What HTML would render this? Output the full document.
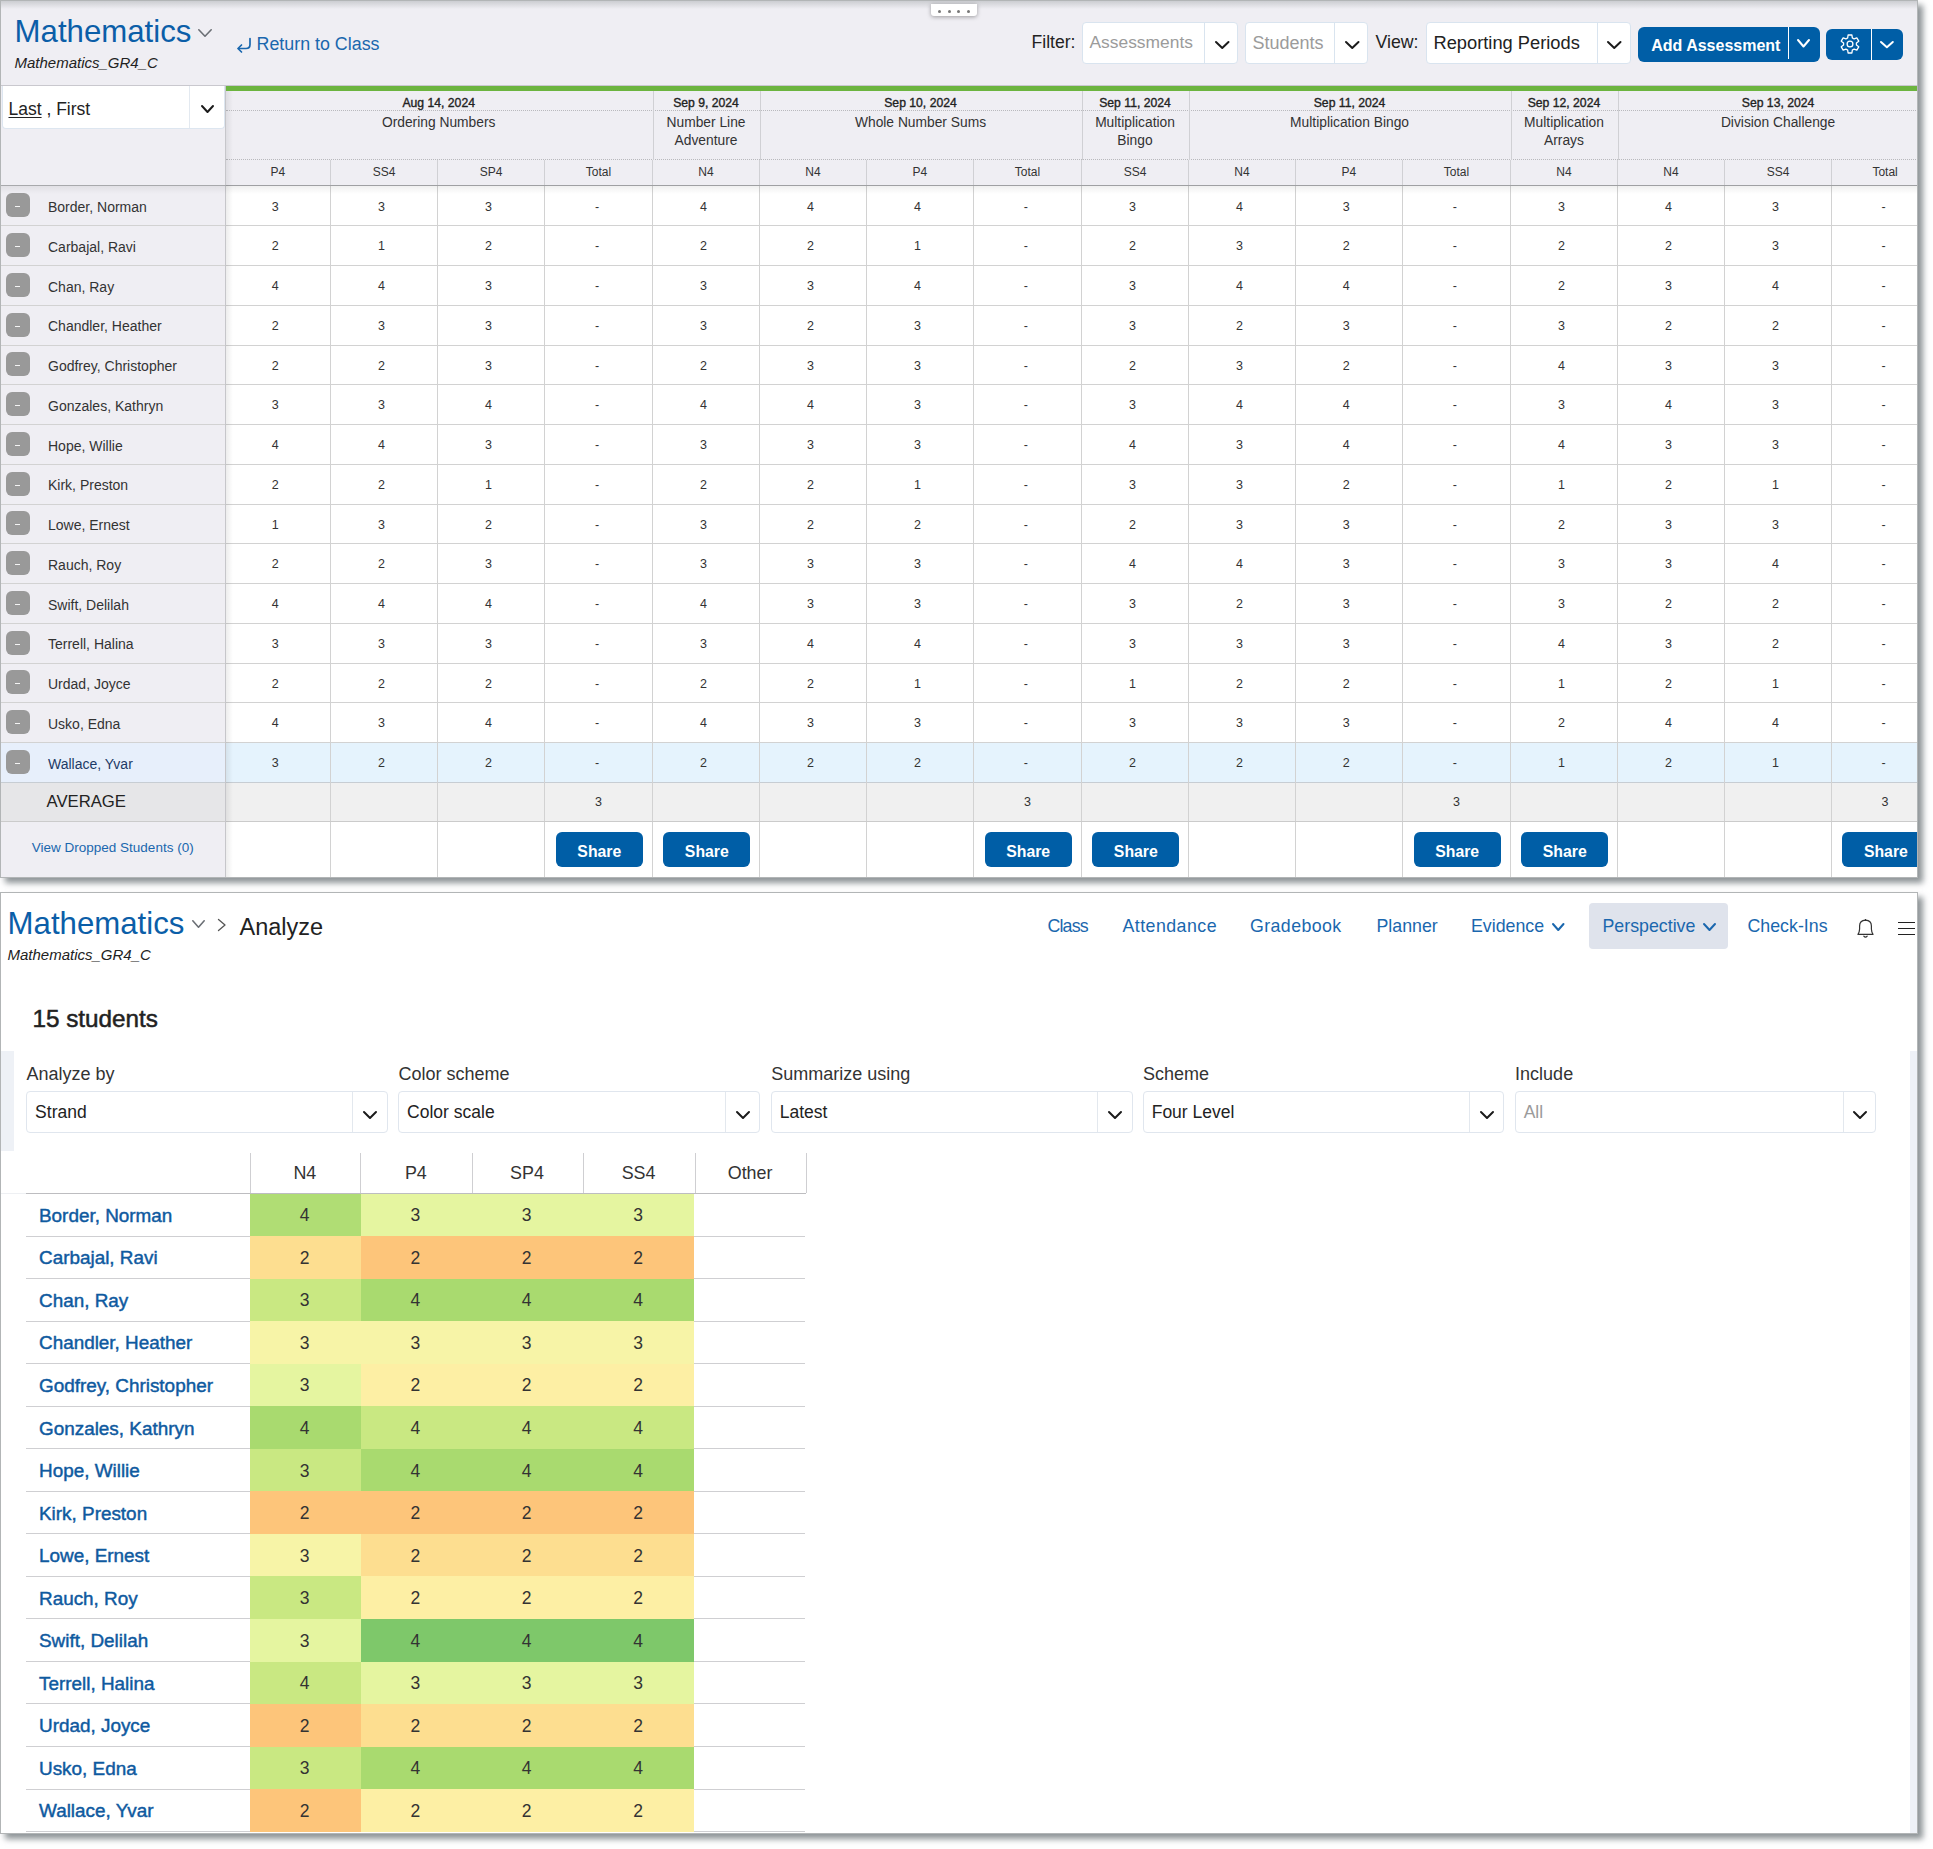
<!DOCTYPE html><html><head><meta charset="utf-8"><style>
html,body{margin:0;padding:0;background:#fff;}
body{width:1933px;height:1849px;position:relative;overflow:hidden;font-family:"Liberation Sans", sans-serif;}
.t{position:absolute;line-height:1;white-space:nowrap;}
.r{position:absolute;}
.panel{position:absolute;overflow:hidden;}
</style></head><body>
<div class="panel" style="left:0;top:0;width:1918px;height:878px;background:#efeef3;box-shadow:5px 5px 6px rgba(105,113,118,.75);">
<div class="r" style="left:0.00px;top:0.00px;width:1918.00px;height:9.00px;background:linear-gradient(rgba(160,165,168,.5),rgba(160,165,168,0));"></div>
<div class="t" style="left:14.60px;top:16.19px;font-size:31.2px;color:#0b5ea8;font-weight:normal;font-style:normal;">Mathematics</div>
<svg class="r" style="left:196.00px;top:26.50px" width="18.00" height="12.00"><polyline points="2.80,2.80 9.00,9.20 15.20,2.80" fill="none" stroke="#6b6f75" stroke-width="1.6" stroke-linecap="round" stroke-linejoin="round"/></svg>
<div class="t" style="left:14.50px;top:55.30px;font-size:15px;color:#222;font-weight:normal;font-style:italic;">Mathematics_GR4_C</div>
<svg class="r" style="left:235px;top:36px" width="18" height="18"><path d="M15 2.5 V8.5 Q15 12.5 11 12.5 H3.5" fill="none" stroke="#1a67ae" stroke-width="1.7" stroke-linecap="round"/><path d="M6.5 9 L3 12.5 L6.5 16" fill="none" stroke="#1a67ae" stroke-width="1.7" stroke-linecap="round" stroke-linejoin="round"/></svg>
<div class="t" style="left:256.50px;top:36.39px;font-size:17.85px;color:#1a67ae;font-weight:normal;font-style:normal;">Return to Class</div>
<div class="r" style="left:931px;top:4px;width:46px;height:12px;background:#fff;border-radius:0 0 3px 3px;box-shadow:0 1px 4px rgba(0,0,0,.35);"></div>
<div class="r" style="left:937.8px;top:9.8px;width:3px;height:3px;border-radius:50%;background:#777;"></div>
<div class="r" style="left:947.5px;top:9.8px;width:3px;height:3px;border-radius:50%;background:#777;"></div>
<div class="r" style="left:957.1px;top:9.8px;width:3px;height:3px;border-radius:50%;background:#777;"></div>
<div class="r" style="left:966.8px;top:9.8px;width:3px;height:3px;border-radius:50%;background:#777;"></div>
<div class="t" style="left:1031.50px;top:34.20px;font-size:17.6px;color:#222;font-weight:normal;font-style:normal;">Filter:</div>
<div class="r" style="left:1082.4px;top:21.5px;width:155.9px;height:42.9px;background:#fff;border:1px solid #d9e4ef;box-sizing:border-box;border-radius:4px;"></div>
<div class="r" style="left:1204.40px;top:22.50px;width:1.00px;height:40.90px;background:#d9e4ef;"></div>
<div class="t" style="left:1089.50px;top:34.37px;font-size:17.4px;color:#9b9b9b;font-weight:normal;font-style:normal;">Assessments</div>
<svg class="r" style="left:1213.00px;top:38.50px" width="18.50" height="12.00"><polyline points="3.00,3.00 9.25,9.00 15.50,3.00" fill="none" stroke="#1b1b1b" stroke-width="2" stroke-linecap="round" stroke-linejoin="round"/></svg>
<div class="r" style="left:1245.4px;top:21.5px;width:122.9px;height:42.9px;background:#fff;border:1px solid #d9e4ef;box-sizing:border-box;border-radius:4px;"></div>
<div class="r" style="left:1334.40px;top:22.50px;width:1.00px;height:40.90px;background:#d9e4ef;"></div>
<div class="t" style="left:1252.50px;top:33.86px;font-size:18px;color:#9b9b9b;font-weight:normal;font-style:normal;">Students</div>
<svg class="r" style="left:1342.50px;top:38.50px" width="18.50" height="12.00"><polyline points="3.00,3.00 9.25,9.00 15.50,3.00" fill="none" stroke="#1b1b1b" stroke-width="2" stroke-linecap="round" stroke-linejoin="round"/></svg>
<div class="t" style="left:1375.50px;top:34.12px;font-size:17.7px;color:#222;font-weight:normal;font-style:normal;">View:</div>
<div class="r" style="left:1425.6px;top:21.5px;width:205.4px;height:42.9px;background:#fff;border:1px solid #d9e4ef;box-sizing:border-box;border-radius:4px;"></div>
<div class="r" style="left:1596.50px;top:22.50px;width:1.00px;height:40.90px;background:#d9e4ef;"></div>
<div class="t" style="left:1433.50px;top:33.61px;font-size:18.3px;color:#222;font-weight:normal;font-style:normal;">Reporting Periods</div>
<svg class="r" style="left:1604.50px;top:38.50px" width="18.50" height="12.00"><polyline points="3.00,3.00 9.25,9.00 15.50,3.00" fill="none" stroke="#1b1b1b" stroke-width="2" stroke-linecap="round" stroke-linejoin="round"/></svg>
<div class="r" style="left:1638px;top:27px;width:182px;height:35px;background:#005ea6;border-radius:6px;"></div>
<div class="r" style="left:1788.00px;top:27.00px;width:1.20px;height:32.00px;background:#fff;"></div>
<div class="t" style="left:1651.20px;top:38.46px;font-size:16px;color:#fff;font-weight:bold;font-style:normal;">Add Assessment</div>
<svg class="r" style="left:1795.00px;top:36.70px" width="17.00" height="12.50"><polyline points="3.00,3.00 8.50,9.50 14.00,3.00" fill="none" stroke="#fff" stroke-width="2" stroke-linecap="round" stroke-linejoin="round"/></svg>
<div class="r" style="left:1826px;top:28.7px;width:77px;height:31.3px;background:#005ea6;border-radius:6px;"></div>
<div class="r" style="left:1871.00px;top:28.70px;width:1.20px;height:31.30px;background:#fff;"></div>
<svg class="r" style="left:1839.6px;top:33.8px" width="20" height="20"><path d="M7.67 3.93 L8.09 1.00 L11.91 1.00 L12.33 3.93 L14.09 4.95 L16.84 3.84 L18.75 7.16 L16.42 8.98 L16.42 11.02 L18.75 12.84 L16.84 16.16 L14.09 15.05 L12.33 16.07 L11.91 19.00 L8.09 19.00 L7.67 16.07 L5.91 15.05 L3.16 16.16 L1.25 12.84 L3.58 11.02 L3.58 8.98 L1.25 7.16 L3.16 3.84 L5.91 4.95 Z" fill="none" stroke="#fff" stroke-width="1.3" stroke-linejoin="round"/><circle cx="10" cy="10" r="2.9" fill="none" stroke="#fff" stroke-width="1.3"/></svg>
<svg class="r" style="left:1877.50px;top:39.30px" width="17.80" height="11.30"><polyline points="3.00,3.00 8.90,8.30 14.80,3.00" fill="none" stroke="#fff" stroke-width="2" stroke-linecap="round" stroke-linejoin="round"/></svg>
<div class="r" style="left:0.00px;top:85.00px;width:1918.00px;height:1.00px;background:#c9c8ce;"></div>
<div class="r" style="left:1.5px;top:86px;width:223px;height:42.6px;background:#fff;border:1px solid #dde6f0;border-top:none;box-sizing:border-box;border-radius:0 0 4px 4px;"></div>
<div class="r" style="left:189.00px;top:86.00px;width:1.00px;height:41.60px;background:#e3e9f0;"></div>
<div class="t" style="left:8.50px;top:101.19px;font-size:17.5px;color:#222;font-weight:normal;font-style:normal;"><span style="text-decoration:underline;text-underline-offset:2px;text-decoration-thickness:1px">Last</span> , First</div>
<svg class="r" style="left:199.00px;top:103.00px" width="17.00" height="12.00"><polyline points="3.00,3.00 8.50,9.00 14.00,3.00" fill="none" stroke="#1b1b1b" stroke-width="2" stroke-linecap="round" stroke-linejoin="round"/></svg>
<div class="r" style="left:226.00px;top:86.00px;width:1692.00px;height:5.00px;background:#6cb43f;"></div>
<div class="r" style="left:226px;top:110px;width:1692px;height:0;border-top:1px dotted #b9b9bd;"></div>
<div class="r" style="left:226px;top:159px;width:1692px;height:0;border-top:1px dotted #b9b9bd;"></div>
<div class="t" style="left:278.70px;width:320px;text-align:center;top:96.77px;font-size:12.2px;color:#222;font-weight:normal;font-style:normal;-webkit-text-stroke:0.35px #222;">Aug 14, 2024</div>
<div class="t" style="left:278.70px;width:320px;text-align:center;top:116.32px;font-size:13.8px;color:#333;font-weight:normal;font-style:normal;">Ordering Numbers</div>
<div class="r" style="left:653.00px;top:91.00px;width:1.00px;height:68.50px;background:#d0d0d4;"></div>
<div class="t" style="left:546.00px;width:320px;text-align:center;top:96.77px;font-size:12.2px;color:#222;font-weight:normal;font-style:normal;-webkit-text-stroke:0.35px #222;">Sep 9, 2024</div>
<div class="t" style="left:546.00px;width:320px;text-align:center;top:116.32px;font-size:13.8px;color:#333;font-weight:normal;font-style:normal;">Number Line</div>
<div class="t" style="left:546.00px;width:320px;text-align:center;top:134.32px;font-size:13.8px;color:#333;font-weight:normal;font-style:normal;">Adventure</div>
<div class="r" style="left:760.00px;top:91.00px;width:1.00px;height:68.50px;background:#d0d0d4;"></div>
<div class="t" style="left:760.50px;width:320px;text-align:center;top:96.77px;font-size:12.2px;color:#222;font-weight:normal;font-style:normal;-webkit-text-stroke:0.35px #222;">Sep 10, 2024</div>
<div class="t" style="left:760.50px;width:320px;text-align:center;top:116.32px;font-size:13.8px;color:#333;font-weight:normal;font-style:normal;">Whole Number Sums</div>
<div class="r" style="left:1082.00px;top:91.00px;width:1.00px;height:68.50px;background:#d0d0d4;"></div>
<div class="t" style="left:975.00px;width:320px;text-align:center;top:96.77px;font-size:12.2px;color:#222;font-weight:normal;font-style:normal;-webkit-text-stroke:0.35px #222;">Sep 11, 2024</div>
<div class="t" style="left:975.00px;width:320px;text-align:center;top:116.32px;font-size:13.8px;color:#333;font-weight:normal;font-style:normal;">Multiplication</div>
<div class="t" style="left:975.00px;width:320px;text-align:center;top:134.32px;font-size:13.8px;color:#333;font-weight:normal;font-style:normal;">Bingo</div>
<div class="r" style="left:1189.00px;top:91.00px;width:1.00px;height:68.50px;background:#d0d0d4;"></div>
<div class="t" style="left:1189.55px;width:320px;text-align:center;top:96.77px;font-size:12.2px;color:#222;font-weight:normal;font-style:normal;-webkit-text-stroke:0.35px #222;">Sep 11, 2024</div>
<div class="t" style="left:1189.55px;width:320px;text-align:center;top:116.32px;font-size:13.8px;color:#333;font-weight:normal;font-style:normal;">Multiplication Bingo</div>
<div class="r" style="left:1511.00px;top:91.00px;width:1.00px;height:68.50px;background:#d0d0d4;"></div>
<div class="t" style="left:1403.95px;width:320px;text-align:center;top:96.77px;font-size:12.2px;color:#222;font-weight:normal;font-style:normal;-webkit-text-stroke:0.35px #222;">Sep 12, 2024</div>
<div class="t" style="left:1403.95px;width:320px;text-align:center;top:116.32px;font-size:13.8px;color:#333;font-weight:normal;font-style:normal;">Multiplication</div>
<div class="t" style="left:1403.95px;width:320px;text-align:center;top:134.32px;font-size:13.8px;color:#333;font-weight:normal;font-style:normal;">Arrays</div>
<div class="r" style="left:1618.00px;top:91.00px;width:1.00px;height:68.50px;background:#d0d0d4;"></div>
<div class="t" style="left:1618.05px;width:320px;text-align:center;top:96.77px;font-size:12.2px;color:#222;font-weight:normal;font-style:normal;-webkit-text-stroke:0.35px #222;">Sep 13, 2024</div>
<div class="t" style="left:1618.05px;width:320px;text-align:center;top:116.32px;font-size:13.8px;color:#333;font-weight:normal;font-style:normal;">Division Challenge</div>
<div class="t" style="left:227.80px;width:100px;text-align:center;top:165.84px;font-size:12px;color:#333;font-weight:normal;font-style:normal;">P4</div>
<div class="t" style="left:334.10px;width:100px;text-align:center;top:165.84px;font-size:12px;color:#333;font-weight:normal;font-style:normal;">SS4</div>
<div class="r" style="left:330.00px;top:160.00px;width:1.00px;height:25.00px;background:#d0d0d4;"></div>
<div class="t" style="left:441.10px;width:100px;text-align:center;top:165.84px;font-size:12px;color:#333;font-weight:normal;font-style:normal;">SP4</div>
<div class="r" style="left:437.00px;top:160.00px;width:1.00px;height:25.00px;background:#d0d0d4;"></div>
<div class="t" style="left:548.50px;width:100px;text-align:center;top:165.84px;font-size:12px;color:#333;font-weight:normal;font-style:normal;">Total</div>
<div class="r" style="left:544.00px;top:160.00px;width:1.00px;height:25.00px;background:#d0d0d4;"></div>
<div class="t" style="left:656.00px;width:100px;text-align:center;top:165.84px;font-size:12px;color:#333;font-weight:normal;font-style:normal;">N4</div>
<div class="r" style="left:652.00px;top:160.00px;width:1.00px;height:25.00px;background:#d0d0d4;"></div>
<div class="t" style="left:763.00px;width:100px;text-align:center;top:165.84px;font-size:12px;color:#333;font-weight:normal;font-style:normal;">N4</div>
<div class="r" style="left:759.00px;top:160.00px;width:1.00px;height:25.00px;background:#d0d0d4;"></div>
<div class="t" style="left:869.90px;width:100px;text-align:center;top:165.84px;font-size:12px;color:#333;font-weight:normal;font-style:normal;">P4</div>
<div class="r" style="left:866.00px;top:160.00px;width:1.00px;height:25.00px;background:#d0d0d4;"></div>
<div class="t" style="left:977.40px;width:100px;text-align:center;top:165.84px;font-size:12px;color:#333;font-weight:normal;font-style:normal;">Total</div>
<div class="r" style="left:973.00px;top:160.00px;width:1.00px;height:25.00px;background:#d0d0d4;"></div>
<div class="t" style="left:1085.00px;width:100px;text-align:center;top:165.84px;font-size:12px;color:#333;font-weight:normal;font-style:normal;">SS4</div>
<div class="r" style="left:1081.00px;top:160.00px;width:1.00px;height:25.00px;background:#d0d0d4;"></div>
<div class="t" style="left:1191.95px;width:100px;text-align:center;top:165.84px;font-size:12px;color:#333;font-weight:normal;font-style:normal;">N4</div>
<div class="r" style="left:1188.00px;top:160.00px;width:1.00px;height:25.00px;background:#d0d0d4;"></div>
<div class="t" style="left:1298.80px;width:100px;text-align:center;top:165.84px;font-size:12px;color:#333;font-weight:normal;font-style:normal;">P4</div>
<div class="r" style="left:1295.00px;top:160.00px;width:1.00px;height:25.00px;background:#d0d0d4;"></div>
<div class="t" style="left:1406.40px;width:100px;text-align:center;top:165.84px;font-size:12px;color:#333;font-weight:normal;font-style:normal;">Total</div>
<div class="r" style="left:1402.00px;top:160.00px;width:1.00px;height:25.00px;background:#d0d0d4;"></div>
<div class="t" style="left:1513.95px;width:100px;text-align:center;top:165.84px;font-size:12px;color:#333;font-weight:normal;font-style:normal;">N4</div>
<div class="r" style="left:1510.00px;top:160.00px;width:1.00px;height:25.00px;background:#d0d0d4;"></div>
<div class="t" style="left:1620.95px;width:100px;text-align:center;top:165.84px;font-size:12px;color:#333;font-weight:normal;font-style:normal;">N4</div>
<div class="r" style="left:1617.00px;top:160.00px;width:1.00px;height:25.00px;background:#d0d0d4;"></div>
<div class="t" style="left:1728.00px;width:100px;text-align:center;top:165.84px;font-size:12px;color:#333;font-weight:normal;font-style:normal;">SS4</div>
<div class="r" style="left:1724.00px;top:160.00px;width:1.00px;height:25.00px;background:#d0d0d4;"></div>
<div class="t" style="left:1835.10px;width:100px;text-align:center;top:165.84px;font-size:12px;color:#333;font-weight:normal;font-style:normal;">Total</div>
<div class="r" style="left:1831.00px;top:160.00px;width:1.00px;height:25.00px;background:#d0d0d4;"></div>
<div class="r" style="left:226.00px;top:185.00px;width:1692.00px;height:1.30px;background:#9fa0a3;"></div>
<div class="r" style="left:226.00px;top:186.30px;width:1692.00px;height:596.00px;background:#fff;"></div>
<div class="t" style="left:245.30px;width:60px;text-align:center;top:200.72px;font-size:12.5px;color:#333;font-weight:normal;font-style:normal;">3</div>
<div class="t" style="left:351.60px;width:60px;text-align:center;top:200.72px;font-size:12.5px;color:#333;font-weight:normal;font-style:normal;">3</div>
<div class="t" style="left:458.60px;width:60px;text-align:center;top:200.72px;font-size:12.5px;color:#333;font-weight:normal;font-style:normal;">3</div>
<div class="t" style="left:567.00px;width:60px;text-align:center;top:200.72px;font-size:12.5px;color:#333;font-weight:normal;font-style:normal;">-</div>
<div class="t" style="left:673.50px;width:60px;text-align:center;top:200.72px;font-size:12.5px;color:#333;font-weight:normal;font-style:normal;">4</div>
<div class="t" style="left:780.50px;width:60px;text-align:center;top:200.72px;font-size:12.5px;color:#333;font-weight:normal;font-style:normal;">4</div>
<div class="t" style="left:887.40px;width:60px;text-align:center;top:200.72px;font-size:12.5px;color:#333;font-weight:normal;font-style:normal;">4</div>
<div class="t" style="left:995.90px;width:60px;text-align:center;top:200.72px;font-size:12.5px;color:#333;font-weight:normal;font-style:normal;">-</div>
<div class="t" style="left:1102.50px;width:60px;text-align:center;top:200.72px;font-size:12.5px;color:#333;font-weight:normal;font-style:normal;">3</div>
<div class="t" style="left:1209.45px;width:60px;text-align:center;top:200.72px;font-size:12.5px;color:#333;font-weight:normal;font-style:normal;">4</div>
<div class="t" style="left:1316.30px;width:60px;text-align:center;top:200.72px;font-size:12.5px;color:#333;font-weight:normal;font-style:normal;">3</div>
<div class="t" style="left:1424.90px;width:60px;text-align:center;top:200.72px;font-size:12.5px;color:#333;font-weight:normal;font-style:normal;">-</div>
<div class="t" style="left:1531.45px;width:60px;text-align:center;top:200.72px;font-size:12.5px;color:#333;font-weight:normal;font-style:normal;">3</div>
<div class="t" style="left:1638.45px;width:60px;text-align:center;top:200.72px;font-size:12.5px;color:#333;font-weight:normal;font-style:normal;">4</div>
<div class="t" style="left:1745.50px;width:60px;text-align:center;top:200.72px;font-size:12.5px;color:#333;font-weight:normal;font-style:normal;">3</div>
<div class="t" style="left:1853.60px;width:60px;text-align:center;top:200.72px;font-size:12.5px;color:#333;font-weight:normal;font-style:normal;">-</div>
<div class="r" style="left:6px;top:193.30px;width:24px;height:24px;border-radius:6px;background:#999;"></div>
<div class="r" style="left:15.30px;top:206.30px;width:5.20px;height:1.00px;background:#f4f4f4;"></div>
<div class="t" style="left:48.00px;top:200.05px;font-size:14px;color:#333;font-weight:normal;font-style:normal;">Border, Norman</div>
<div class="r" style="left:1.00px;top:225.45px;width:1917.00px;height:1.00px;background:#d2d2d2;"></div>
<div class="t" style="left:245.30px;width:60px;text-align:center;top:240.47px;font-size:12.5px;color:#333;font-weight:normal;font-style:normal;">2</div>
<div class="t" style="left:351.60px;width:60px;text-align:center;top:240.47px;font-size:12.5px;color:#333;font-weight:normal;font-style:normal;">1</div>
<div class="t" style="left:458.60px;width:60px;text-align:center;top:240.47px;font-size:12.5px;color:#333;font-weight:normal;font-style:normal;">2</div>
<div class="t" style="left:567.00px;width:60px;text-align:center;top:240.47px;font-size:12.5px;color:#333;font-weight:normal;font-style:normal;">-</div>
<div class="t" style="left:673.50px;width:60px;text-align:center;top:240.47px;font-size:12.5px;color:#333;font-weight:normal;font-style:normal;">2</div>
<div class="t" style="left:780.50px;width:60px;text-align:center;top:240.47px;font-size:12.5px;color:#333;font-weight:normal;font-style:normal;">2</div>
<div class="t" style="left:887.40px;width:60px;text-align:center;top:240.47px;font-size:12.5px;color:#333;font-weight:normal;font-style:normal;">1</div>
<div class="t" style="left:995.90px;width:60px;text-align:center;top:240.47px;font-size:12.5px;color:#333;font-weight:normal;font-style:normal;">-</div>
<div class="t" style="left:1102.50px;width:60px;text-align:center;top:240.47px;font-size:12.5px;color:#333;font-weight:normal;font-style:normal;">2</div>
<div class="t" style="left:1209.45px;width:60px;text-align:center;top:240.47px;font-size:12.5px;color:#333;font-weight:normal;font-style:normal;">3</div>
<div class="t" style="left:1316.30px;width:60px;text-align:center;top:240.47px;font-size:12.5px;color:#333;font-weight:normal;font-style:normal;">2</div>
<div class="t" style="left:1424.90px;width:60px;text-align:center;top:240.47px;font-size:12.5px;color:#333;font-weight:normal;font-style:normal;">-</div>
<div class="t" style="left:1531.45px;width:60px;text-align:center;top:240.47px;font-size:12.5px;color:#333;font-weight:normal;font-style:normal;">2</div>
<div class="t" style="left:1638.45px;width:60px;text-align:center;top:240.47px;font-size:12.5px;color:#333;font-weight:normal;font-style:normal;">2</div>
<div class="t" style="left:1745.50px;width:60px;text-align:center;top:240.47px;font-size:12.5px;color:#333;font-weight:normal;font-style:normal;">3</div>
<div class="t" style="left:1853.60px;width:60px;text-align:center;top:240.47px;font-size:12.5px;color:#333;font-weight:normal;font-style:normal;">-</div>
<div class="r" style="left:6px;top:233.05px;width:24px;height:24px;border-radius:6px;background:#999;"></div>
<div class="r" style="left:15.30px;top:246.05px;width:5.20px;height:1.00px;background:#f4f4f4;"></div>
<div class="t" style="left:48.00px;top:239.80px;font-size:14px;color:#333;font-weight:normal;font-style:normal;">Carbajal, Ravi</div>
<div class="r" style="left:1.00px;top:265.20px;width:1917.00px;height:1.00px;background:#d2d2d2;"></div>
<div class="t" style="left:245.30px;width:60px;text-align:center;top:280.22px;font-size:12.5px;color:#333;font-weight:normal;font-style:normal;">4</div>
<div class="t" style="left:351.60px;width:60px;text-align:center;top:280.22px;font-size:12.5px;color:#333;font-weight:normal;font-style:normal;">4</div>
<div class="t" style="left:458.60px;width:60px;text-align:center;top:280.22px;font-size:12.5px;color:#333;font-weight:normal;font-style:normal;">3</div>
<div class="t" style="left:567.00px;width:60px;text-align:center;top:280.22px;font-size:12.5px;color:#333;font-weight:normal;font-style:normal;">-</div>
<div class="t" style="left:673.50px;width:60px;text-align:center;top:280.22px;font-size:12.5px;color:#333;font-weight:normal;font-style:normal;">3</div>
<div class="t" style="left:780.50px;width:60px;text-align:center;top:280.22px;font-size:12.5px;color:#333;font-weight:normal;font-style:normal;">3</div>
<div class="t" style="left:887.40px;width:60px;text-align:center;top:280.22px;font-size:12.5px;color:#333;font-weight:normal;font-style:normal;">4</div>
<div class="t" style="left:995.90px;width:60px;text-align:center;top:280.22px;font-size:12.5px;color:#333;font-weight:normal;font-style:normal;">-</div>
<div class="t" style="left:1102.50px;width:60px;text-align:center;top:280.22px;font-size:12.5px;color:#333;font-weight:normal;font-style:normal;">3</div>
<div class="t" style="left:1209.45px;width:60px;text-align:center;top:280.22px;font-size:12.5px;color:#333;font-weight:normal;font-style:normal;">4</div>
<div class="t" style="left:1316.30px;width:60px;text-align:center;top:280.22px;font-size:12.5px;color:#333;font-weight:normal;font-style:normal;">4</div>
<div class="t" style="left:1424.90px;width:60px;text-align:center;top:280.22px;font-size:12.5px;color:#333;font-weight:normal;font-style:normal;">-</div>
<div class="t" style="left:1531.45px;width:60px;text-align:center;top:280.22px;font-size:12.5px;color:#333;font-weight:normal;font-style:normal;">2</div>
<div class="t" style="left:1638.45px;width:60px;text-align:center;top:280.22px;font-size:12.5px;color:#333;font-weight:normal;font-style:normal;">3</div>
<div class="t" style="left:1745.50px;width:60px;text-align:center;top:280.22px;font-size:12.5px;color:#333;font-weight:normal;font-style:normal;">4</div>
<div class="t" style="left:1853.60px;width:60px;text-align:center;top:280.22px;font-size:12.5px;color:#333;font-weight:normal;font-style:normal;">-</div>
<div class="r" style="left:6px;top:272.80px;width:24px;height:24px;border-radius:6px;background:#999;"></div>
<div class="r" style="left:15.30px;top:285.80px;width:5.20px;height:1.00px;background:#f4f4f4;"></div>
<div class="t" style="left:48.00px;top:279.55px;font-size:14px;color:#333;font-weight:normal;font-style:normal;">Chan, Ray</div>
<div class="r" style="left:1.00px;top:304.95px;width:1917.00px;height:1.00px;background:#d2d2d2;"></div>
<div class="t" style="left:245.30px;width:60px;text-align:center;top:319.97px;font-size:12.5px;color:#333;font-weight:normal;font-style:normal;">2</div>
<div class="t" style="left:351.60px;width:60px;text-align:center;top:319.97px;font-size:12.5px;color:#333;font-weight:normal;font-style:normal;">3</div>
<div class="t" style="left:458.60px;width:60px;text-align:center;top:319.97px;font-size:12.5px;color:#333;font-weight:normal;font-style:normal;">3</div>
<div class="t" style="left:567.00px;width:60px;text-align:center;top:319.97px;font-size:12.5px;color:#333;font-weight:normal;font-style:normal;">-</div>
<div class="t" style="left:673.50px;width:60px;text-align:center;top:319.97px;font-size:12.5px;color:#333;font-weight:normal;font-style:normal;">3</div>
<div class="t" style="left:780.50px;width:60px;text-align:center;top:319.97px;font-size:12.5px;color:#333;font-weight:normal;font-style:normal;">2</div>
<div class="t" style="left:887.40px;width:60px;text-align:center;top:319.97px;font-size:12.5px;color:#333;font-weight:normal;font-style:normal;">3</div>
<div class="t" style="left:995.90px;width:60px;text-align:center;top:319.97px;font-size:12.5px;color:#333;font-weight:normal;font-style:normal;">-</div>
<div class="t" style="left:1102.50px;width:60px;text-align:center;top:319.97px;font-size:12.5px;color:#333;font-weight:normal;font-style:normal;">3</div>
<div class="t" style="left:1209.45px;width:60px;text-align:center;top:319.97px;font-size:12.5px;color:#333;font-weight:normal;font-style:normal;">2</div>
<div class="t" style="left:1316.30px;width:60px;text-align:center;top:319.97px;font-size:12.5px;color:#333;font-weight:normal;font-style:normal;">3</div>
<div class="t" style="left:1424.90px;width:60px;text-align:center;top:319.97px;font-size:12.5px;color:#333;font-weight:normal;font-style:normal;">-</div>
<div class="t" style="left:1531.45px;width:60px;text-align:center;top:319.97px;font-size:12.5px;color:#333;font-weight:normal;font-style:normal;">3</div>
<div class="t" style="left:1638.45px;width:60px;text-align:center;top:319.97px;font-size:12.5px;color:#333;font-weight:normal;font-style:normal;">2</div>
<div class="t" style="left:1745.50px;width:60px;text-align:center;top:319.97px;font-size:12.5px;color:#333;font-weight:normal;font-style:normal;">2</div>
<div class="t" style="left:1853.60px;width:60px;text-align:center;top:319.97px;font-size:12.5px;color:#333;font-weight:normal;font-style:normal;">-</div>
<div class="r" style="left:6px;top:312.55px;width:24px;height:24px;border-radius:6px;background:#999;"></div>
<div class="r" style="left:15.30px;top:325.55px;width:5.20px;height:1.00px;background:#f4f4f4;"></div>
<div class="t" style="left:48.00px;top:319.30px;font-size:14px;color:#333;font-weight:normal;font-style:normal;">Chandler, Heather</div>
<div class="r" style="left:1.00px;top:344.70px;width:1917.00px;height:1.00px;background:#d2d2d2;"></div>
<div class="t" style="left:245.30px;width:60px;text-align:center;top:359.72px;font-size:12.5px;color:#333;font-weight:normal;font-style:normal;">2</div>
<div class="t" style="left:351.60px;width:60px;text-align:center;top:359.72px;font-size:12.5px;color:#333;font-weight:normal;font-style:normal;">2</div>
<div class="t" style="left:458.60px;width:60px;text-align:center;top:359.72px;font-size:12.5px;color:#333;font-weight:normal;font-style:normal;">3</div>
<div class="t" style="left:567.00px;width:60px;text-align:center;top:359.72px;font-size:12.5px;color:#333;font-weight:normal;font-style:normal;">-</div>
<div class="t" style="left:673.50px;width:60px;text-align:center;top:359.72px;font-size:12.5px;color:#333;font-weight:normal;font-style:normal;">2</div>
<div class="t" style="left:780.50px;width:60px;text-align:center;top:359.72px;font-size:12.5px;color:#333;font-weight:normal;font-style:normal;">3</div>
<div class="t" style="left:887.40px;width:60px;text-align:center;top:359.72px;font-size:12.5px;color:#333;font-weight:normal;font-style:normal;">3</div>
<div class="t" style="left:995.90px;width:60px;text-align:center;top:359.72px;font-size:12.5px;color:#333;font-weight:normal;font-style:normal;">-</div>
<div class="t" style="left:1102.50px;width:60px;text-align:center;top:359.72px;font-size:12.5px;color:#333;font-weight:normal;font-style:normal;">2</div>
<div class="t" style="left:1209.45px;width:60px;text-align:center;top:359.72px;font-size:12.5px;color:#333;font-weight:normal;font-style:normal;">3</div>
<div class="t" style="left:1316.30px;width:60px;text-align:center;top:359.72px;font-size:12.5px;color:#333;font-weight:normal;font-style:normal;">2</div>
<div class="t" style="left:1424.90px;width:60px;text-align:center;top:359.72px;font-size:12.5px;color:#333;font-weight:normal;font-style:normal;">-</div>
<div class="t" style="left:1531.45px;width:60px;text-align:center;top:359.72px;font-size:12.5px;color:#333;font-weight:normal;font-style:normal;">4</div>
<div class="t" style="left:1638.45px;width:60px;text-align:center;top:359.72px;font-size:12.5px;color:#333;font-weight:normal;font-style:normal;">3</div>
<div class="t" style="left:1745.50px;width:60px;text-align:center;top:359.72px;font-size:12.5px;color:#333;font-weight:normal;font-style:normal;">3</div>
<div class="t" style="left:1853.60px;width:60px;text-align:center;top:359.72px;font-size:12.5px;color:#333;font-weight:normal;font-style:normal;">-</div>
<div class="r" style="left:6px;top:352.30px;width:24px;height:24px;border-radius:6px;background:#999;"></div>
<div class="r" style="left:15.30px;top:365.30px;width:5.20px;height:1.00px;background:#f4f4f4;"></div>
<div class="t" style="left:48.00px;top:359.05px;font-size:14px;color:#333;font-weight:normal;font-style:normal;">Godfrey, Christopher</div>
<div class="r" style="left:1.00px;top:384.45px;width:1917.00px;height:1.00px;background:#d2d2d2;"></div>
<div class="t" style="left:245.30px;width:60px;text-align:center;top:399.47px;font-size:12.5px;color:#333;font-weight:normal;font-style:normal;">3</div>
<div class="t" style="left:351.60px;width:60px;text-align:center;top:399.47px;font-size:12.5px;color:#333;font-weight:normal;font-style:normal;">3</div>
<div class="t" style="left:458.60px;width:60px;text-align:center;top:399.47px;font-size:12.5px;color:#333;font-weight:normal;font-style:normal;">4</div>
<div class="t" style="left:567.00px;width:60px;text-align:center;top:399.47px;font-size:12.5px;color:#333;font-weight:normal;font-style:normal;">-</div>
<div class="t" style="left:673.50px;width:60px;text-align:center;top:399.47px;font-size:12.5px;color:#333;font-weight:normal;font-style:normal;">4</div>
<div class="t" style="left:780.50px;width:60px;text-align:center;top:399.47px;font-size:12.5px;color:#333;font-weight:normal;font-style:normal;">4</div>
<div class="t" style="left:887.40px;width:60px;text-align:center;top:399.47px;font-size:12.5px;color:#333;font-weight:normal;font-style:normal;">3</div>
<div class="t" style="left:995.90px;width:60px;text-align:center;top:399.47px;font-size:12.5px;color:#333;font-weight:normal;font-style:normal;">-</div>
<div class="t" style="left:1102.50px;width:60px;text-align:center;top:399.47px;font-size:12.5px;color:#333;font-weight:normal;font-style:normal;">3</div>
<div class="t" style="left:1209.45px;width:60px;text-align:center;top:399.47px;font-size:12.5px;color:#333;font-weight:normal;font-style:normal;">4</div>
<div class="t" style="left:1316.30px;width:60px;text-align:center;top:399.47px;font-size:12.5px;color:#333;font-weight:normal;font-style:normal;">4</div>
<div class="t" style="left:1424.90px;width:60px;text-align:center;top:399.47px;font-size:12.5px;color:#333;font-weight:normal;font-style:normal;">-</div>
<div class="t" style="left:1531.45px;width:60px;text-align:center;top:399.47px;font-size:12.5px;color:#333;font-weight:normal;font-style:normal;">3</div>
<div class="t" style="left:1638.45px;width:60px;text-align:center;top:399.47px;font-size:12.5px;color:#333;font-weight:normal;font-style:normal;">4</div>
<div class="t" style="left:1745.50px;width:60px;text-align:center;top:399.47px;font-size:12.5px;color:#333;font-weight:normal;font-style:normal;">3</div>
<div class="t" style="left:1853.60px;width:60px;text-align:center;top:399.47px;font-size:12.5px;color:#333;font-weight:normal;font-style:normal;">-</div>
<div class="r" style="left:6px;top:392.05px;width:24px;height:24px;border-radius:6px;background:#999;"></div>
<div class="r" style="left:15.30px;top:405.05px;width:5.20px;height:1.00px;background:#f4f4f4;"></div>
<div class="t" style="left:48.00px;top:398.80px;font-size:14px;color:#333;font-weight:normal;font-style:normal;">Gonzales, Kathryn</div>
<div class="r" style="left:1.00px;top:424.20px;width:1917.00px;height:1.00px;background:#d2d2d2;"></div>
<div class="t" style="left:245.30px;width:60px;text-align:center;top:439.22px;font-size:12.5px;color:#333;font-weight:normal;font-style:normal;">4</div>
<div class="t" style="left:351.60px;width:60px;text-align:center;top:439.22px;font-size:12.5px;color:#333;font-weight:normal;font-style:normal;">4</div>
<div class="t" style="left:458.60px;width:60px;text-align:center;top:439.22px;font-size:12.5px;color:#333;font-weight:normal;font-style:normal;">3</div>
<div class="t" style="left:567.00px;width:60px;text-align:center;top:439.22px;font-size:12.5px;color:#333;font-weight:normal;font-style:normal;">-</div>
<div class="t" style="left:673.50px;width:60px;text-align:center;top:439.22px;font-size:12.5px;color:#333;font-weight:normal;font-style:normal;">3</div>
<div class="t" style="left:780.50px;width:60px;text-align:center;top:439.22px;font-size:12.5px;color:#333;font-weight:normal;font-style:normal;">3</div>
<div class="t" style="left:887.40px;width:60px;text-align:center;top:439.22px;font-size:12.5px;color:#333;font-weight:normal;font-style:normal;">3</div>
<div class="t" style="left:995.90px;width:60px;text-align:center;top:439.22px;font-size:12.5px;color:#333;font-weight:normal;font-style:normal;">-</div>
<div class="t" style="left:1102.50px;width:60px;text-align:center;top:439.22px;font-size:12.5px;color:#333;font-weight:normal;font-style:normal;">4</div>
<div class="t" style="left:1209.45px;width:60px;text-align:center;top:439.22px;font-size:12.5px;color:#333;font-weight:normal;font-style:normal;">3</div>
<div class="t" style="left:1316.30px;width:60px;text-align:center;top:439.22px;font-size:12.5px;color:#333;font-weight:normal;font-style:normal;">4</div>
<div class="t" style="left:1424.90px;width:60px;text-align:center;top:439.22px;font-size:12.5px;color:#333;font-weight:normal;font-style:normal;">-</div>
<div class="t" style="left:1531.45px;width:60px;text-align:center;top:439.22px;font-size:12.5px;color:#333;font-weight:normal;font-style:normal;">4</div>
<div class="t" style="left:1638.45px;width:60px;text-align:center;top:439.22px;font-size:12.5px;color:#333;font-weight:normal;font-style:normal;">3</div>
<div class="t" style="left:1745.50px;width:60px;text-align:center;top:439.22px;font-size:12.5px;color:#333;font-weight:normal;font-style:normal;">3</div>
<div class="t" style="left:1853.60px;width:60px;text-align:center;top:439.22px;font-size:12.5px;color:#333;font-weight:normal;font-style:normal;">-</div>
<div class="r" style="left:6px;top:431.80px;width:24px;height:24px;border-radius:6px;background:#999;"></div>
<div class="r" style="left:15.30px;top:444.80px;width:5.20px;height:1.00px;background:#f4f4f4;"></div>
<div class="t" style="left:48.00px;top:438.55px;font-size:14px;color:#333;font-weight:normal;font-style:normal;">Hope, Willie</div>
<div class="r" style="left:1.00px;top:463.95px;width:1917.00px;height:1.00px;background:#d2d2d2;"></div>
<div class="t" style="left:245.30px;width:60px;text-align:center;top:478.97px;font-size:12.5px;color:#333;font-weight:normal;font-style:normal;">2</div>
<div class="t" style="left:351.60px;width:60px;text-align:center;top:478.97px;font-size:12.5px;color:#333;font-weight:normal;font-style:normal;">2</div>
<div class="t" style="left:458.60px;width:60px;text-align:center;top:478.97px;font-size:12.5px;color:#333;font-weight:normal;font-style:normal;">1</div>
<div class="t" style="left:567.00px;width:60px;text-align:center;top:478.97px;font-size:12.5px;color:#333;font-weight:normal;font-style:normal;">-</div>
<div class="t" style="left:673.50px;width:60px;text-align:center;top:478.97px;font-size:12.5px;color:#333;font-weight:normal;font-style:normal;">2</div>
<div class="t" style="left:780.50px;width:60px;text-align:center;top:478.97px;font-size:12.5px;color:#333;font-weight:normal;font-style:normal;">2</div>
<div class="t" style="left:887.40px;width:60px;text-align:center;top:478.97px;font-size:12.5px;color:#333;font-weight:normal;font-style:normal;">1</div>
<div class="t" style="left:995.90px;width:60px;text-align:center;top:478.97px;font-size:12.5px;color:#333;font-weight:normal;font-style:normal;">-</div>
<div class="t" style="left:1102.50px;width:60px;text-align:center;top:478.97px;font-size:12.5px;color:#333;font-weight:normal;font-style:normal;">3</div>
<div class="t" style="left:1209.45px;width:60px;text-align:center;top:478.97px;font-size:12.5px;color:#333;font-weight:normal;font-style:normal;">3</div>
<div class="t" style="left:1316.30px;width:60px;text-align:center;top:478.97px;font-size:12.5px;color:#333;font-weight:normal;font-style:normal;">2</div>
<div class="t" style="left:1424.90px;width:60px;text-align:center;top:478.97px;font-size:12.5px;color:#333;font-weight:normal;font-style:normal;">-</div>
<div class="t" style="left:1531.45px;width:60px;text-align:center;top:478.97px;font-size:12.5px;color:#333;font-weight:normal;font-style:normal;">1</div>
<div class="t" style="left:1638.45px;width:60px;text-align:center;top:478.97px;font-size:12.5px;color:#333;font-weight:normal;font-style:normal;">2</div>
<div class="t" style="left:1745.50px;width:60px;text-align:center;top:478.97px;font-size:12.5px;color:#333;font-weight:normal;font-style:normal;">1</div>
<div class="t" style="left:1853.60px;width:60px;text-align:center;top:478.97px;font-size:12.5px;color:#333;font-weight:normal;font-style:normal;">-</div>
<div class="r" style="left:6px;top:471.55px;width:24px;height:24px;border-radius:6px;background:#999;"></div>
<div class="r" style="left:15.30px;top:484.55px;width:5.20px;height:1.00px;background:#f4f4f4;"></div>
<div class="t" style="left:48.00px;top:478.30px;font-size:14px;color:#333;font-weight:normal;font-style:normal;">Kirk, Preston</div>
<div class="r" style="left:1.00px;top:503.70px;width:1917.00px;height:1.00px;background:#d2d2d2;"></div>
<div class="t" style="left:245.30px;width:60px;text-align:center;top:518.72px;font-size:12.5px;color:#333;font-weight:normal;font-style:normal;">1</div>
<div class="t" style="left:351.60px;width:60px;text-align:center;top:518.72px;font-size:12.5px;color:#333;font-weight:normal;font-style:normal;">3</div>
<div class="t" style="left:458.60px;width:60px;text-align:center;top:518.72px;font-size:12.5px;color:#333;font-weight:normal;font-style:normal;">2</div>
<div class="t" style="left:567.00px;width:60px;text-align:center;top:518.72px;font-size:12.5px;color:#333;font-weight:normal;font-style:normal;">-</div>
<div class="t" style="left:673.50px;width:60px;text-align:center;top:518.72px;font-size:12.5px;color:#333;font-weight:normal;font-style:normal;">3</div>
<div class="t" style="left:780.50px;width:60px;text-align:center;top:518.72px;font-size:12.5px;color:#333;font-weight:normal;font-style:normal;">2</div>
<div class="t" style="left:887.40px;width:60px;text-align:center;top:518.72px;font-size:12.5px;color:#333;font-weight:normal;font-style:normal;">2</div>
<div class="t" style="left:995.90px;width:60px;text-align:center;top:518.72px;font-size:12.5px;color:#333;font-weight:normal;font-style:normal;">-</div>
<div class="t" style="left:1102.50px;width:60px;text-align:center;top:518.72px;font-size:12.5px;color:#333;font-weight:normal;font-style:normal;">2</div>
<div class="t" style="left:1209.45px;width:60px;text-align:center;top:518.72px;font-size:12.5px;color:#333;font-weight:normal;font-style:normal;">3</div>
<div class="t" style="left:1316.30px;width:60px;text-align:center;top:518.72px;font-size:12.5px;color:#333;font-weight:normal;font-style:normal;">3</div>
<div class="t" style="left:1424.90px;width:60px;text-align:center;top:518.72px;font-size:12.5px;color:#333;font-weight:normal;font-style:normal;">-</div>
<div class="t" style="left:1531.45px;width:60px;text-align:center;top:518.72px;font-size:12.5px;color:#333;font-weight:normal;font-style:normal;">2</div>
<div class="t" style="left:1638.45px;width:60px;text-align:center;top:518.72px;font-size:12.5px;color:#333;font-weight:normal;font-style:normal;">3</div>
<div class="t" style="left:1745.50px;width:60px;text-align:center;top:518.72px;font-size:12.5px;color:#333;font-weight:normal;font-style:normal;">3</div>
<div class="t" style="left:1853.60px;width:60px;text-align:center;top:518.72px;font-size:12.5px;color:#333;font-weight:normal;font-style:normal;">-</div>
<div class="r" style="left:6px;top:511.30px;width:24px;height:24px;border-radius:6px;background:#999;"></div>
<div class="r" style="left:15.30px;top:524.30px;width:5.20px;height:1.00px;background:#f4f4f4;"></div>
<div class="t" style="left:48.00px;top:518.05px;font-size:14px;color:#333;font-weight:normal;font-style:normal;">Lowe, Ernest</div>
<div class="r" style="left:1.00px;top:543.45px;width:1917.00px;height:1.00px;background:#d2d2d2;"></div>
<div class="t" style="left:245.30px;width:60px;text-align:center;top:558.47px;font-size:12.5px;color:#333;font-weight:normal;font-style:normal;">2</div>
<div class="t" style="left:351.60px;width:60px;text-align:center;top:558.47px;font-size:12.5px;color:#333;font-weight:normal;font-style:normal;">2</div>
<div class="t" style="left:458.60px;width:60px;text-align:center;top:558.47px;font-size:12.5px;color:#333;font-weight:normal;font-style:normal;">3</div>
<div class="t" style="left:567.00px;width:60px;text-align:center;top:558.47px;font-size:12.5px;color:#333;font-weight:normal;font-style:normal;">-</div>
<div class="t" style="left:673.50px;width:60px;text-align:center;top:558.47px;font-size:12.5px;color:#333;font-weight:normal;font-style:normal;">3</div>
<div class="t" style="left:780.50px;width:60px;text-align:center;top:558.47px;font-size:12.5px;color:#333;font-weight:normal;font-style:normal;">3</div>
<div class="t" style="left:887.40px;width:60px;text-align:center;top:558.47px;font-size:12.5px;color:#333;font-weight:normal;font-style:normal;">3</div>
<div class="t" style="left:995.90px;width:60px;text-align:center;top:558.47px;font-size:12.5px;color:#333;font-weight:normal;font-style:normal;">-</div>
<div class="t" style="left:1102.50px;width:60px;text-align:center;top:558.47px;font-size:12.5px;color:#333;font-weight:normal;font-style:normal;">4</div>
<div class="t" style="left:1209.45px;width:60px;text-align:center;top:558.47px;font-size:12.5px;color:#333;font-weight:normal;font-style:normal;">4</div>
<div class="t" style="left:1316.30px;width:60px;text-align:center;top:558.47px;font-size:12.5px;color:#333;font-weight:normal;font-style:normal;">3</div>
<div class="t" style="left:1424.90px;width:60px;text-align:center;top:558.47px;font-size:12.5px;color:#333;font-weight:normal;font-style:normal;">-</div>
<div class="t" style="left:1531.45px;width:60px;text-align:center;top:558.47px;font-size:12.5px;color:#333;font-weight:normal;font-style:normal;">3</div>
<div class="t" style="left:1638.45px;width:60px;text-align:center;top:558.47px;font-size:12.5px;color:#333;font-weight:normal;font-style:normal;">3</div>
<div class="t" style="left:1745.50px;width:60px;text-align:center;top:558.47px;font-size:12.5px;color:#333;font-weight:normal;font-style:normal;">4</div>
<div class="t" style="left:1853.60px;width:60px;text-align:center;top:558.47px;font-size:12.5px;color:#333;font-weight:normal;font-style:normal;">-</div>
<div class="r" style="left:6px;top:551.05px;width:24px;height:24px;border-radius:6px;background:#999;"></div>
<div class="r" style="left:15.30px;top:564.05px;width:5.20px;height:1.00px;background:#f4f4f4;"></div>
<div class="t" style="left:48.00px;top:557.80px;font-size:14px;color:#333;font-weight:normal;font-style:normal;">Rauch, Roy</div>
<div class="r" style="left:1.00px;top:583.20px;width:1917.00px;height:1.00px;background:#d2d2d2;"></div>
<div class="t" style="left:245.30px;width:60px;text-align:center;top:598.22px;font-size:12.5px;color:#333;font-weight:normal;font-style:normal;">4</div>
<div class="t" style="left:351.60px;width:60px;text-align:center;top:598.22px;font-size:12.5px;color:#333;font-weight:normal;font-style:normal;">4</div>
<div class="t" style="left:458.60px;width:60px;text-align:center;top:598.22px;font-size:12.5px;color:#333;font-weight:normal;font-style:normal;">4</div>
<div class="t" style="left:567.00px;width:60px;text-align:center;top:598.22px;font-size:12.5px;color:#333;font-weight:normal;font-style:normal;">-</div>
<div class="t" style="left:673.50px;width:60px;text-align:center;top:598.22px;font-size:12.5px;color:#333;font-weight:normal;font-style:normal;">4</div>
<div class="t" style="left:780.50px;width:60px;text-align:center;top:598.22px;font-size:12.5px;color:#333;font-weight:normal;font-style:normal;">3</div>
<div class="t" style="left:887.40px;width:60px;text-align:center;top:598.22px;font-size:12.5px;color:#333;font-weight:normal;font-style:normal;">3</div>
<div class="t" style="left:995.90px;width:60px;text-align:center;top:598.22px;font-size:12.5px;color:#333;font-weight:normal;font-style:normal;">-</div>
<div class="t" style="left:1102.50px;width:60px;text-align:center;top:598.22px;font-size:12.5px;color:#333;font-weight:normal;font-style:normal;">3</div>
<div class="t" style="left:1209.45px;width:60px;text-align:center;top:598.22px;font-size:12.5px;color:#333;font-weight:normal;font-style:normal;">2</div>
<div class="t" style="left:1316.30px;width:60px;text-align:center;top:598.22px;font-size:12.5px;color:#333;font-weight:normal;font-style:normal;">3</div>
<div class="t" style="left:1424.90px;width:60px;text-align:center;top:598.22px;font-size:12.5px;color:#333;font-weight:normal;font-style:normal;">-</div>
<div class="t" style="left:1531.45px;width:60px;text-align:center;top:598.22px;font-size:12.5px;color:#333;font-weight:normal;font-style:normal;">3</div>
<div class="t" style="left:1638.45px;width:60px;text-align:center;top:598.22px;font-size:12.5px;color:#333;font-weight:normal;font-style:normal;">2</div>
<div class="t" style="left:1745.50px;width:60px;text-align:center;top:598.22px;font-size:12.5px;color:#333;font-weight:normal;font-style:normal;">2</div>
<div class="t" style="left:1853.60px;width:60px;text-align:center;top:598.22px;font-size:12.5px;color:#333;font-weight:normal;font-style:normal;">-</div>
<div class="r" style="left:6px;top:590.80px;width:24px;height:24px;border-radius:6px;background:#999;"></div>
<div class="r" style="left:15.30px;top:603.80px;width:5.20px;height:1.00px;background:#f4f4f4;"></div>
<div class="t" style="left:48.00px;top:597.55px;font-size:14px;color:#333;font-weight:normal;font-style:normal;">Swift, Delilah</div>
<div class="r" style="left:1.00px;top:622.95px;width:1917.00px;height:1.00px;background:#d2d2d2;"></div>
<div class="t" style="left:245.30px;width:60px;text-align:center;top:637.97px;font-size:12.5px;color:#333;font-weight:normal;font-style:normal;">3</div>
<div class="t" style="left:351.60px;width:60px;text-align:center;top:637.97px;font-size:12.5px;color:#333;font-weight:normal;font-style:normal;">3</div>
<div class="t" style="left:458.60px;width:60px;text-align:center;top:637.97px;font-size:12.5px;color:#333;font-weight:normal;font-style:normal;">3</div>
<div class="t" style="left:567.00px;width:60px;text-align:center;top:637.97px;font-size:12.5px;color:#333;font-weight:normal;font-style:normal;">-</div>
<div class="t" style="left:673.50px;width:60px;text-align:center;top:637.97px;font-size:12.5px;color:#333;font-weight:normal;font-style:normal;">3</div>
<div class="t" style="left:780.50px;width:60px;text-align:center;top:637.97px;font-size:12.5px;color:#333;font-weight:normal;font-style:normal;">4</div>
<div class="t" style="left:887.40px;width:60px;text-align:center;top:637.97px;font-size:12.5px;color:#333;font-weight:normal;font-style:normal;">4</div>
<div class="t" style="left:995.90px;width:60px;text-align:center;top:637.97px;font-size:12.5px;color:#333;font-weight:normal;font-style:normal;">-</div>
<div class="t" style="left:1102.50px;width:60px;text-align:center;top:637.97px;font-size:12.5px;color:#333;font-weight:normal;font-style:normal;">3</div>
<div class="t" style="left:1209.45px;width:60px;text-align:center;top:637.97px;font-size:12.5px;color:#333;font-weight:normal;font-style:normal;">3</div>
<div class="t" style="left:1316.30px;width:60px;text-align:center;top:637.97px;font-size:12.5px;color:#333;font-weight:normal;font-style:normal;">3</div>
<div class="t" style="left:1424.90px;width:60px;text-align:center;top:637.97px;font-size:12.5px;color:#333;font-weight:normal;font-style:normal;">-</div>
<div class="t" style="left:1531.45px;width:60px;text-align:center;top:637.97px;font-size:12.5px;color:#333;font-weight:normal;font-style:normal;">4</div>
<div class="t" style="left:1638.45px;width:60px;text-align:center;top:637.97px;font-size:12.5px;color:#333;font-weight:normal;font-style:normal;">3</div>
<div class="t" style="left:1745.50px;width:60px;text-align:center;top:637.97px;font-size:12.5px;color:#333;font-weight:normal;font-style:normal;">2</div>
<div class="t" style="left:1853.60px;width:60px;text-align:center;top:637.97px;font-size:12.5px;color:#333;font-weight:normal;font-style:normal;">-</div>
<div class="r" style="left:6px;top:630.55px;width:24px;height:24px;border-radius:6px;background:#999;"></div>
<div class="r" style="left:15.30px;top:643.55px;width:5.20px;height:1.00px;background:#f4f4f4;"></div>
<div class="t" style="left:48.00px;top:637.30px;font-size:14px;color:#333;font-weight:normal;font-style:normal;">Terrell, Halina</div>
<div class="r" style="left:1.00px;top:662.70px;width:1917.00px;height:1.00px;background:#d2d2d2;"></div>
<div class="t" style="left:245.30px;width:60px;text-align:center;top:677.72px;font-size:12.5px;color:#333;font-weight:normal;font-style:normal;">2</div>
<div class="t" style="left:351.60px;width:60px;text-align:center;top:677.72px;font-size:12.5px;color:#333;font-weight:normal;font-style:normal;">2</div>
<div class="t" style="left:458.60px;width:60px;text-align:center;top:677.72px;font-size:12.5px;color:#333;font-weight:normal;font-style:normal;">2</div>
<div class="t" style="left:567.00px;width:60px;text-align:center;top:677.72px;font-size:12.5px;color:#333;font-weight:normal;font-style:normal;">-</div>
<div class="t" style="left:673.50px;width:60px;text-align:center;top:677.72px;font-size:12.5px;color:#333;font-weight:normal;font-style:normal;">2</div>
<div class="t" style="left:780.50px;width:60px;text-align:center;top:677.72px;font-size:12.5px;color:#333;font-weight:normal;font-style:normal;">2</div>
<div class="t" style="left:887.40px;width:60px;text-align:center;top:677.72px;font-size:12.5px;color:#333;font-weight:normal;font-style:normal;">1</div>
<div class="t" style="left:995.90px;width:60px;text-align:center;top:677.72px;font-size:12.5px;color:#333;font-weight:normal;font-style:normal;">-</div>
<div class="t" style="left:1102.50px;width:60px;text-align:center;top:677.72px;font-size:12.5px;color:#333;font-weight:normal;font-style:normal;">1</div>
<div class="t" style="left:1209.45px;width:60px;text-align:center;top:677.72px;font-size:12.5px;color:#333;font-weight:normal;font-style:normal;">2</div>
<div class="t" style="left:1316.30px;width:60px;text-align:center;top:677.72px;font-size:12.5px;color:#333;font-weight:normal;font-style:normal;">2</div>
<div class="t" style="left:1424.90px;width:60px;text-align:center;top:677.72px;font-size:12.5px;color:#333;font-weight:normal;font-style:normal;">-</div>
<div class="t" style="left:1531.45px;width:60px;text-align:center;top:677.72px;font-size:12.5px;color:#333;font-weight:normal;font-style:normal;">1</div>
<div class="t" style="left:1638.45px;width:60px;text-align:center;top:677.72px;font-size:12.5px;color:#333;font-weight:normal;font-style:normal;">2</div>
<div class="t" style="left:1745.50px;width:60px;text-align:center;top:677.72px;font-size:12.5px;color:#333;font-weight:normal;font-style:normal;">1</div>
<div class="t" style="left:1853.60px;width:60px;text-align:center;top:677.72px;font-size:12.5px;color:#333;font-weight:normal;font-style:normal;">-</div>
<div class="r" style="left:6px;top:670.30px;width:24px;height:24px;border-radius:6px;background:#999;"></div>
<div class="r" style="left:15.30px;top:683.30px;width:5.20px;height:1.00px;background:#f4f4f4;"></div>
<div class="t" style="left:48.00px;top:677.05px;font-size:14px;color:#333;font-weight:normal;font-style:normal;">Urdad, Joyce</div>
<div class="r" style="left:1.00px;top:702.45px;width:1917.00px;height:1.00px;background:#d2d2d2;"></div>
<div class="t" style="left:245.30px;width:60px;text-align:center;top:717.47px;font-size:12.5px;color:#333;font-weight:normal;font-style:normal;">4</div>
<div class="t" style="left:351.60px;width:60px;text-align:center;top:717.47px;font-size:12.5px;color:#333;font-weight:normal;font-style:normal;">3</div>
<div class="t" style="left:458.60px;width:60px;text-align:center;top:717.47px;font-size:12.5px;color:#333;font-weight:normal;font-style:normal;">4</div>
<div class="t" style="left:567.00px;width:60px;text-align:center;top:717.47px;font-size:12.5px;color:#333;font-weight:normal;font-style:normal;">-</div>
<div class="t" style="left:673.50px;width:60px;text-align:center;top:717.47px;font-size:12.5px;color:#333;font-weight:normal;font-style:normal;">4</div>
<div class="t" style="left:780.50px;width:60px;text-align:center;top:717.47px;font-size:12.5px;color:#333;font-weight:normal;font-style:normal;">3</div>
<div class="t" style="left:887.40px;width:60px;text-align:center;top:717.47px;font-size:12.5px;color:#333;font-weight:normal;font-style:normal;">3</div>
<div class="t" style="left:995.90px;width:60px;text-align:center;top:717.47px;font-size:12.5px;color:#333;font-weight:normal;font-style:normal;">-</div>
<div class="t" style="left:1102.50px;width:60px;text-align:center;top:717.47px;font-size:12.5px;color:#333;font-weight:normal;font-style:normal;">3</div>
<div class="t" style="left:1209.45px;width:60px;text-align:center;top:717.47px;font-size:12.5px;color:#333;font-weight:normal;font-style:normal;">3</div>
<div class="t" style="left:1316.30px;width:60px;text-align:center;top:717.47px;font-size:12.5px;color:#333;font-weight:normal;font-style:normal;">3</div>
<div class="t" style="left:1424.90px;width:60px;text-align:center;top:717.47px;font-size:12.5px;color:#333;font-weight:normal;font-style:normal;">-</div>
<div class="t" style="left:1531.45px;width:60px;text-align:center;top:717.47px;font-size:12.5px;color:#333;font-weight:normal;font-style:normal;">2</div>
<div class="t" style="left:1638.45px;width:60px;text-align:center;top:717.47px;font-size:12.5px;color:#333;font-weight:normal;font-style:normal;">4</div>
<div class="t" style="left:1745.50px;width:60px;text-align:center;top:717.47px;font-size:12.5px;color:#333;font-weight:normal;font-style:normal;">4</div>
<div class="t" style="left:1853.60px;width:60px;text-align:center;top:717.47px;font-size:12.5px;color:#333;font-weight:normal;font-style:normal;">-</div>
<div class="r" style="left:6px;top:710.05px;width:24px;height:24px;border-radius:6px;background:#999;"></div>
<div class="r" style="left:15.30px;top:723.05px;width:5.20px;height:1.00px;background:#f4f4f4;"></div>
<div class="t" style="left:48.00px;top:716.80px;font-size:14px;color:#333;font-weight:normal;font-style:normal;">Usko, Edna</div>
<div class="r" style="left:1.00px;top:742.20px;width:1917.00px;height:1.00px;background:#d2d2d2;"></div>
<div class="r" style="left:1.00px;top:742.80px;width:224.50px;height:39.75px;background:#e7effb;"></div>
<div class="r" style="left:226.00px;top:742.80px;width:1692.00px;height:39.75px;background:#e5f3fd;"></div>
<div class="t" style="left:245.30px;width:60px;text-align:center;top:757.22px;font-size:12.5px;color:#333;font-weight:normal;font-style:normal;">3</div>
<div class="t" style="left:351.60px;width:60px;text-align:center;top:757.22px;font-size:12.5px;color:#333;font-weight:normal;font-style:normal;">2</div>
<div class="t" style="left:458.60px;width:60px;text-align:center;top:757.22px;font-size:12.5px;color:#333;font-weight:normal;font-style:normal;">2</div>
<div class="t" style="left:567.00px;width:60px;text-align:center;top:757.22px;font-size:12.5px;color:#333;font-weight:normal;font-style:normal;">-</div>
<div class="t" style="left:673.50px;width:60px;text-align:center;top:757.22px;font-size:12.5px;color:#333;font-weight:normal;font-style:normal;">2</div>
<div class="t" style="left:780.50px;width:60px;text-align:center;top:757.22px;font-size:12.5px;color:#333;font-weight:normal;font-style:normal;">2</div>
<div class="t" style="left:887.40px;width:60px;text-align:center;top:757.22px;font-size:12.5px;color:#333;font-weight:normal;font-style:normal;">2</div>
<div class="t" style="left:995.90px;width:60px;text-align:center;top:757.22px;font-size:12.5px;color:#333;font-weight:normal;font-style:normal;">-</div>
<div class="t" style="left:1102.50px;width:60px;text-align:center;top:757.22px;font-size:12.5px;color:#333;font-weight:normal;font-style:normal;">2</div>
<div class="t" style="left:1209.45px;width:60px;text-align:center;top:757.22px;font-size:12.5px;color:#333;font-weight:normal;font-style:normal;">2</div>
<div class="t" style="left:1316.30px;width:60px;text-align:center;top:757.22px;font-size:12.5px;color:#333;font-weight:normal;font-style:normal;">2</div>
<div class="t" style="left:1424.90px;width:60px;text-align:center;top:757.22px;font-size:12.5px;color:#333;font-weight:normal;font-style:normal;">-</div>
<div class="t" style="left:1531.45px;width:60px;text-align:center;top:757.22px;font-size:12.5px;color:#333;font-weight:normal;font-style:normal;">1</div>
<div class="t" style="left:1638.45px;width:60px;text-align:center;top:757.22px;font-size:12.5px;color:#333;font-weight:normal;font-style:normal;">2</div>
<div class="t" style="left:1745.50px;width:60px;text-align:center;top:757.22px;font-size:12.5px;color:#333;font-weight:normal;font-style:normal;">1</div>
<div class="t" style="left:1853.60px;width:60px;text-align:center;top:757.22px;font-size:12.5px;color:#333;font-weight:normal;font-style:normal;">-</div>
<div class="r" style="left:6px;top:749.80px;width:24px;height:24px;border-radius:6px;background:#999;"></div>
<div class="r" style="left:15.30px;top:762.80px;width:5.20px;height:1.00px;background:#f4f4f4;"></div>
<div class="t" style="left:48.00px;top:756.55px;font-size:14px;color:#1d3a66;font-weight:normal;font-style:normal;">Wallace, Yvar</div>
<div class="r" style="left:1.00px;top:781.95px;width:1917.00px;height:1.00px;background:#c7cdd3;"></div>
<div class="r" style="left:330.00px;top:186.00px;width:1.00px;height:691.00px;background:#d2d2d2;"></div>
<div class="r" style="left:437.00px;top:186.00px;width:1.00px;height:691.00px;background:#d2d2d2;"></div>
<div class="r" style="left:544.00px;top:186.00px;width:1.00px;height:691.00px;background:#d2d2d2;"></div>
<div class="r" style="left:652.00px;top:186.00px;width:1.00px;height:691.00px;background:#d2d2d2;"></div>
<div class="r" style="left:759.00px;top:186.00px;width:1.00px;height:691.00px;background:#d2d2d2;"></div>
<div class="r" style="left:866.00px;top:186.00px;width:1.00px;height:691.00px;background:#d2d2d2;"></div>
<div class="r" style="left:973.00px;top:186.00px;width:1.00px;height:691.00px;background:#d2d2d2;"></div>
<div class="r" style="left:1081.00px;top:186.00px;width:1.00px;height:691.00px;background:#d2d2d2;"></div>
<div class="r" style="left:1188.00px;top:186.00px;width:1.00px;height:691.00px;background:#d2d2d2;"></div>
<div class="r" style="left:1295.00px;top:186.00px;width:1.00px;height:691.00px;background:#d2d2d2;"></div>
<div class="r" style="left:1402.00px;top:186.00px;width:1.00px;height:691.00px;background:#d2d2d2;"></div>
<div class="r" style="left:1510.00px;top:186.00px;width:1.00px;height:691.00px;background:#d2d2d2;"></div>
<div class="r" style="left:1617.00px;top:186.00px;width:1.00px;height:691.00px;background:#d2d2d2;"></div>
<div class="r" style="left:1724.00px;top:186.00px;width:1.00px;height:691.00px;background:#d2d2d2;"></div>
<div class="r" style="left:1831.00px;top:186.00px;width:1.00px;height:691.00px;background:#d2d2d2;"></div>
<div class="r" style="left:1.00px;top:782.95px;width:224.50px;height:39.00px;background:#e6e6e8;"></div>
<div class="r" style="left:226.00px;top:782.95px;width:1692.00px;height:39.00px;background:#f0f0f0;"></div>
<div class="r" style="left:330.00px;top:782.55px;width:1.00px;height:40.00px;background:#d2d2d2;"></div>
<div class="r" style="left:437.00px;top:782.55px;width:1.00px;height:40.00px;background:#d2d2d2;"></div>
<div class="r" style="left:544.00px;top:782.55px;width:1.00px;height:40.00px;background:#d2d2d2;"></div>
<div class="r" style="left:652.00px;top:782.55px;width:1.00px;height:40.00px;background:#d2d2d2;"></div>
<div class="r" style="left:759.00px;top:782.55px;width:1.00px;height:40.00px;background:#d2d2d2;"></div>
<div class="r" style="left:866.00px;top:782.55px;width:1.00px;height:40.00px;background:#d2d2d2;"></div>
<div class="r" style="left:973.00px;top:782.55px;width:1.00px;height:40.00px;background:#d2d2d2;"></div>
<div class="r" style="left:1081.00px;top:782.55px;width:1.00px;height:40.00px;background:#d2d2d2;"></div>
<div class="r" style="left:1188.00px;top:782.55px;width:1.00px;height:40.00px;background:#d2d2d2;"></div>
<div class="r" style="left:1295.00px;top:782.55px;width:1.00px;height:40.00px;background:#d2d2d2;"></div>
<div class="r" style="left:1402.00px;top:782.55px;width:1.00px;height:40.00px;background:#d2d2d2;"></div>
<div class="r" style="left:1510.00px;top:782.55px;width:1.00px;height:40.00px;background:#d2d2d2;"></div>
<div class="r" style="left:1617.00px;top:782.55px;width:1.00px;height:40.00px;background:#d2d2d2;"></div>
<div class="r" style="left:1724.00px;top:782.55px;width:1.00px;height:40.00px;background:#d2d2d2;"></div>
<div class="r" style="left:1831.00px;top:782.55px;width:1.00px;height:40.00px;background:#d2d2d2;"></div>
<div class="t" style="left:46.50px;top:793.86px;font-size:16.7px;color:#222;font-weight:normal;font-style:normal;">AVERAGE</div>
<div class="t" style="left:568.50px;width:60px;text-align:center;top:796.42px;font-size:12.5px;color:#333;font-weight:normal;font-style:normal;">3</div>
<div class="t" style="left:997.40px;width:60px;text-align:center;top:796.42px;font-size:12.5px;color:#333;font-weight:normal;font-style:normal;">3</div>
<div class="t" style="left:1426.40px;width:60px;text-align:center;top:796.42px;font-size:12.5px;color:#333;font-weight:normal;font-style:normal;">3</div>
<div class="t" style="left:1855.10px;width:60px;text-align:center;top:796.42px;font-size:12.5px;color:#333;font-weight:normal;font-style:normal;">3</div>
<div class="r" style="left:1.00px;top:821.30px;width:1917.00px;height:1.00px;background:#cbcbcb;"></div>
<div class="r" style="left:226.00px;top:822.30px;width:1692.00px;height:55.00px;background:#fff;"></div>
<div class="r" style="left:330.00px;top:822.00px;width:1.00px;height:55.00px;background:#d2d2d2;"></div>
<div class="r" style="left:437.00px;top:822.00px;width:1.00px;height:55.00px;background:#d2d2d2;"></div>
<div class="r" style="left:544.00px;top:822.00px;width:1.00px;height:55.00px;background:#d2d2d2;"></div>
<div class="r" style="left:652.00px;top:822.00px;width:1.00px;height:55.00px;background:#d2d2d2;"></div>
<div class="r" style="left:759.00px;top:822.00px;width:1.00px;height:55.00px;background:#d2d2d2;"></div>
<div class="r" style="left:866.00px;top:822.00px;width:1.00px;height:55.00px;background:#d2d2d2;"></div>
<div class="r" style="left:973.00px;top:822.00px;width:1.00px;height:55.00px;background:#d2d2d2;"></div>
<div class="r" style="left:1081.00px;top:822.00px;width:1.00px;height:55.00px;background:#d2d2d2;"></div>
<div class="r" style="left:1188.00px;top:822.00px;width:1.00px;height:55.00px;background:#d2d2d2;"></div>
<div class="r" style="left:1295.00px;top:822.00px;width:1.00px;height:55.00px;background:#d2d2d2;"></div>
<div class="r" style="left:1402.00px;top:822.00px;width:1.00px;height:55.00px;background:#d2d2d2;"></div>
<div class="r" style="left:1510.00px;top:822.00px;width:1.00px;height:55.00px;background:#d2d2d2;"></div>
<div class="r" style="left:1617.00px;top:822.00px;width:1.00px;height:55.00px;background:#d2d2d2;"></div>
<div class="r" style="left:1724.00px;top:822.00px;width:1.00px;height:55.00px;background:#d2d2d2;"></div>
<div class="r" style="left:1831.00px;top:822.00px;width:1.00px;height:55.00px;background:#d2d2d2;"></div>
<div class="t" style="left:31.80px;top:840.57px;font-size:13.5px;color:#1a67ae;font-weight:normal;font-style:normal;">View Dropped Students (0)</div>
<div class="r" style="left:555.8px;top:832px;width:87px;height:34.5px;background:#005ea6;border-radius:6px;"></div>
<div class="t" style="left:555.80px;width:87px;text-align:center;top:843.83px;font-size:15.8px;color:#fff;font-weight:bold;font-style:normal;">Share</div>
<div class="r" style="left:663.3px;top:832px;width:87px;height:34.5px;background:#005ea6;border-radius:6px;"></div>
<div class="t" style="left:663.30px;width:87px;text-align:center;top:843.83px;font-size:15.8px;color:#fff;font-weight:bold;font-style:normal;">Share</div>
<div class="r" style="left:984.7px;top:832px;width:87px;height:34.5px;background:#005ea6;border-radius:6px;"></div>
<div class="t" style="left:984.70px;width:87px;text-align:center;top:843.83px;font-size:15.8px;color:#fff;font-weight:bold;font-style:normal;">Share</div>
<div class="r" style="left:1092.3px;top:832px;width:87px;height:34.5px;background:#005ea6;border-radius:6px;"></div>
<div class="t" style="left:1092.30px;width:87px;text-align:center;top:843.83px;font-size:15.8px;color:#fff;font-weight:bold;font-style:normal;">Share</div>
<div class="r" style="left:1413.7px;top:832px;width:87px;height:34.5px;background:#005ea6;border-radius:6px;"></div>
<div class="t" style="left:1413.70px;width:87px;text-align:center;top:843.83px;font-size:15.8px;color:#fff;font-weight:bold;font-style:normal;">Share</div>
<div class="r" style="left:1521.2px;top:832px;width:87px;height:34.5px;background:#005ea6;border-radius:6px;"></div>
<div class="t" style="left:1521.25px;width:87px;text-align:center;top:843.83px;font-size:15.8px;color:#fff;font-weight:bold;font-style:normal;">Share</div>
<div class="r" style="left:1842.4px;top:832px;width:87px;height:34.5px;background:#005ea6;border-radius:6px;"></div>
<div class="t" style="left:1842.40px;width:87px;text-align:center;top:843.83px;font-size:15.8px;color:#fff;font-weight:bold;font-style:normal;">Share</div>
<div class="r" style="left:225.00px;top:86.00px;width:1.00px;height:791.00px;background:#c6c6ca;"></div>
<div class="r" style="left:226.00px;top:91.00px;width:7.00px;height:786.00px;background:linear-gradient(90deg,rgba(0,0,0,.07),rgba(0,0,0,0));"></div>
<div class="r" style="left:0.00px;top:186.30px;width:1918.00px;height:8.00px;background:linear-gradient(rgba(0,0,0,.06),rgba(0,0,0,0));"></div>
<div class="r" style="left:1.00px;top:185.00px;width:225.00px;height:1.30px;background:#a8a9ac;"></div>
<div class="r" style="left:0;top:0;width:1918px;height:878px;box-sizing:border-box;border:1px solid #b2b5b6;"></div>
</div>
<div class="panel" style="left:0;top:892px;width:1918px;height:942px;background:#fff;box-shadow:5px 5px 6px rgba(105,113,118,.75);">
<div class="r" style="left:0;top:-892px;width:1933px;height:1849px;">
<div class="t" style="left:7.60px;top:908.19px;font-size:31.2px;color:#0b5ea8;font-weight:normal;font-style:normal;">Mathematics</div>
<svg class="r" style="left:190.00px;top:918.00px" width="17.00" height="12.00"><polyline points="2.80,2.80 8.50,9.20 14.20,2.80" fill="none" stroke="#6b6f75" stroke-width="1.6" stroke-linecap="round" stroke-linejoin="round"/></svg>
<svg class="r" style="left:216px;top:917px" width="12" height="16"><polyline points="2.5,2.5 9,8 2.5,13.5" fill="none" stroke="#555" stroke-width="1.3" stroke-linecap="round" stroke-linejoin="round"/></svg>
<div class="t" style="left:239.50px;top:915.51px;font-size:23.5px;color:#222;font-weight:normal;font-style:normal;">Analyze</div>
<div class="t" style="left:7.50px;top:947.10px;font-size:15px;color:#222;font-weight:normal;font-style:italic;">Mathematics_GR4_C</div>
<div class="r" style="left:1589.20px;top:903.10px;width:138.80px;height:45.70px;background:#dfe3ec;border-radius:4px;"></div>
<div class="t" style="left:1047.50px;top:917.63px;font-size:17.8px;color:#1a67ae;font-weight:normal;font-style:normal;letter-spacing:-0.85px;">Class</div>
<div class="t" style="left:1122.50px;top:917.63px;font-size:17.8px;color:#1a67ae;font-weight:normal;font-style:normal;letter-spacing:0.45px;">Attendance</div>
<div class="t" style="left:1250.00px;top:917.63px;font-size:17.8px;color:#1a67ae;font-weight:normal;font-style:normal;letter-spacing:0.4px;">Gradebook</div>
<div class="t" style="left:1376.50px;top:917.63px;font-size:17.8px;color:#1a67ae;font-weight:normal;font-style:normal;letter-spacing:0px;">Planner</div>
<div class="t" style="left:1471.00px;top:917.63px;font-size:17.8px;color:#1a67ae;font-weight:normal;font-style:normal;letter-spacing:0px;">Evidence</div>
<div class="t" style="left:1602.50px;top:917.63px;font-size:17.8px;color:#1a67ae;font-weight:normal;font-style:normal;letter-spacing:0px;">Perspective</div>
<div class="t" style="left:1747.50px;top:917.63px;font-size:17.8px;color:#1a67ae;font-weight:normal;font-style:normal;letter-spacing:0px;">Check-Ins</div>
<svg class="r" style="left:1549.50px;top:921.00px" width="16.50" height="12.00"><polyline points="3.00,3.00 8.25,9.00 13.50,3.00" fill="none" stroke="#1a67ae" stroke-width="2" stroke-linecap="round" stroke-linejoin="round"/></svg>
<svg class="r" style="left:1700.50px;top:921.00px" width="17.00" height="12.00"><polyline points="3.00,3.00 8.50,9.00 14.00,3.00" fill="none" stroke="#1a67ae" stroke-width="2" stroke-linecap="round" stroke-linejoin="round"/></svg>
<svg class="r" style="left:1855px;top:917px" width="21" height="23"><path d="M3 17.4 Q4.5 15 4.6 12 V9 Q4.6 3.5 10.5 3.2 Q16.4 3.5 16.4 9 V12 Q16.5 15 18 17.4 Z" fill="none" stroke="#333" stroke-width="1.2" stroke-linejoin="round"/><path d="M8.8 19.2 Q10.5 21.2 12.2 19.2" fill="none" stroke="#333" stroke-width="1.2" stroke-linecap="round"/><path d="M10.5 2 V3" stroke="#333" stroke-width="1.2"/></svg>
<div class="r" style="left:1898.30px;top:921.80px;width:16.60px;height:1.30px;background:#222;"></div>
<div class="r" style="left:1898.30px;top:927.80px;width:16.60px;height:1.30px;background:#222;"></div>
<div class="r" style="left:1898.30px;top:933.70px;width:16.60px;height:1.30px;background:#222;"></div>
<div class="t" style="left:32.40px;top:1007.43px;font-size:24.3px;color:#222;font-weight:normal;font-style:normal;-webkit-text-stroke:0.5px #222;">15 students</div>
<div class="r" style="left:1.00px;top:1051.00px;width:13.00px;height:100.40px;background:#eef1f6;"></div>
<div class="r" style="left:1909.50px;top:1051.00px;width:7.60px;height:782.00px;background:#eef1f7;"></div>
<div class="t" style="left:26.50px;top:1065.16px;font-size:18px;color:#333;font-weight:normal;font-style:normal;">Analyze by</div>
<div class="r" style="left:26.3px;top:1090.8px;width:361.3px;height:42.6px;background:#fff;border:1px solid #e0e6ee;box-sizing:border-box;border-radius:4px;"></div>
<div class="r" style="left:352.40px;top:1091.80px;width:1.00px;height:40.60px;background:#e3e8ee;"></div>
<div class="t" style="left:35.10px;top:1104.49px;font-size:17.5px;color:#222;font-weight:normal;font-style:normal;">Strand</div>
<svg class="r" style="left:361.00px;top:1109.00px" width="18.00" height="12.00"><polyline points="3.00,3.00 9.00,9.00 15.00,3.00" fill="none" stroke="#1b1b1b" stroke-width="2" stroke-linecap="round" stroke-linejoin="round"/></svg>
<div class="t" style="left:398.50px;top:1065.16px;font-size:18px;color:#333;font-weight:normal;font-style:normal;">Color scheme</div>
<div class="r" style="left:398.3px;top:1090.8px;width:361.7px;height:42.6px;background:#fff;border:1px solid #e0e6ee;box-sizing:border-box;border-radius:4px;"></div>
<div class="r" style="left:725.00px;top:1091.80px;width:1.00px;height:40.60px;background:#e3e8ee;"></div>
<div class="t" style="left:407.10px;top:1104.49px;font-size:17.5px;color:#222;font-weight:normal;font-style:normal;">Color scale</div>
<svg class="r" style="left:733.50px;top:1109.00px" width="18.00" height="12.00"><polyline points="3.00,3.00 9.00,9.00 15.00,3.00" fill="none" stroke="#1b1b1b" stroke-width="2" stroke-linecap="round" stroke-linejoin="round"/></svg>
<div class="t" style="left:771.20px;top:1065.16px;font-size:18px;color:#333;font-weight:normal;font-style:normal;">Summarize using</div>
<div class="r" style="left:771.0px;top:1090.8px;width:361.6px;height:42.6px;background:#fff;border:1px solid #e0e6ee;box-sizing:border-box;border-radius:4px;"></div>
<div class="r" style="left:1097.40px;top:1091.80px;width:1.00px;height:40.60px;background:#e3e8ee;"></div>
<div class="t" style="left:779.80px;top:1104.49px;font-size:17.5px;color:#222;font-weight:normal;font-style:normal;">Latest</div>
<svg class="r" style="left:1106.00px;top:1109.00px" width="18.00" height="12.00"><polyline points="3.00,3.00 9.00,9.00 15.00,3.00" fill="none" stroke="#1b1b1b" stroke-width="2" stroke-linecap="round" stroke-linejoin="round"/></svg>
<div class="t" style="left:1143.10px;top:1065.16px;font-size:18px;color:#333;font-weight:normal;font-style:normal;">Scheme</div>
<div class="r" style="left:1142.9px;top:1090.8px;width:361.6px;height:42.6px;background:#fff;border:1px solid #e0e6ee;box-sizing:border-box;border-radius:4px;"></div>
<div class="r" style="left:1469.30px;top:1091.80px;width:1.00px;height:40.60px;background:#e3e8ee;"></div>
<div class="t" style="left:1151.70px;top:1104.49px;font-size:17.5px;color:#222;font-weight:normal;font-style:normal;">Four Level</div>
<svg class="r" style="left:1477.90px;top:1109.00px" width="18.00" height="12.00"><polyline points="3.00,3.00 9.00,9.00 15.00,3.00" fill="none" stroke="#1b1b1b" stroke-width="2" stroke-linecap="round" stroke-linejoin="round"/></svg>
<div class="t" style="left:1515.10px;top:1065.16px;font-size:18px;color:#333;font-weight:normal;font-style:normal;">Include</div>
<div class="r" style="left:1514.9px;top:1090.8px;width:361.6px;height:42.6px;background:#fff;border:1px solid #e0e6ee;box-sizing:border-box;border-radius:4px;"></div>
<div class="r" style="left:1842.50px;top:1091.80px;width:1.00px;height:40.60px;background:#e3e8ee;"></div>
<div class="t" style="left:1523.70px;top:1104.49px;font-size:17.5px;color:#9b9b9b;font-weight:normal;font-style:normal;">All</div>
<svg class="r" style="left:1850.50px;top:1109.00px" width="18.00" height="12.00"><polyline points="3.00,3.00 9.00,9.00 15.00,3.00" fill="none" stroke="#1b1b1b" stroke-width="2" stroke-linecap="round" stroke-linejoin="round"/></svg>
<div class="t" style="left:249.90px;width:110px;text-align:center;top:1165.05px;font-size:17.9px;color:#333;font-weight:normal;font-style:normal;">N4</div>
<div class="t" style="left:360.90px;width:110px;text-align:center;top:1165.05px;font-size:17.9px;color:#333;font-weight:normal;font-style:normal;">P4</div>
<div class="t" style="left:472.00px;width:110px;text-align:center;top:1165.05px;font-size:17.9px;color:#333;font-weight:normal;font-style:normal;">SP4</div>
<div class="t" style="left:583.55px;width:110px;text-align:center;top:1165.05px;font-size:17.9px;color:#333;font-weight:normal;font-style:normal;">SS4</div>
<div class="t" style="left:695.10px;width:110px;text-align:center;top:1165.05px;font-size:17.9px;color:#333;font-weight:normal;font-style:normal;">Other</div>
<div class="r" style="left:249.50px;top:1153.40px;width:1.00px;height:40.00px;background:#cfcfd2;"></div>
<div class="r" style="left:360.30px;top:1153.40px;width:1.00px;height:40.00px;background:#cfcfd2;"></div>
<div class="r" style="left:471.50px;top:1153.40px;width:1.00px;height:40.00px;background:#cfcfd2;"></div>
<div class="r" style="left:582.50px;top:1153.40px;width:1.00px;height:40.00px;background:#cfcfd2;"></div>
<div class="r" style="left:694.60px;top:1153.40px;width:1.00px;height:40.00px;background:#cfcfd2;"></div>
<div class="r" style="left:805.60px;top:1153.40px;width:1.00px;height:40.00px;background:#cfcfd2;"></div>
<div class="r" style="left:26.00px;top:1192.60px;width:780.00px;height:1.20px;background:#bdbdc0;"></div>
<div class="r" style="left:0.00px;top:1192.60px;width:26.00px;height:1.00px;background:#eef0f3;"></div>
<div class="r" style="left:249.50px;top:1193.60px;width:111.00px;height:42.54px;background:#b0dd74;"></div>
<div class="r" style="left:360.50px;top:1193.60px;width:333.60px;height:42.54px;background:#e5f5a0;"></div>
<div class="t" style="left:274.50px;width:60px;text-align:center;top:1207.29px;font-size:17.5px;color:#333;font-weight:normal;font-style:normal;">4</div>
<div class="t" style="left:385.40px;width:60px;text-align:center;top:1207.29px;font-size:17.5px;color:#333;font-weight:normal;font-style:normal;">3</div>
<div class="t" style="left:496.50px;width:60px;text-align:center;top:1207.29px;font-size:17.5px;color:#333;font-weight:normal;font-style:normal;">3</div>
<div class="t" style="left:608.05px;width:60px;text-align:center;top:1207.29px;font-size:17.5px;color:#333;font-weight:normal;font-style:normal;">3</div>
<div class="t" style="left:39.00px;top:1206.80px;font-size:18.9px;color:#0f5a9f;font-weight:normal;font-style:normal;-webkit-text-stroke:0.45px #0f5a9f;">Border, Norman</div>
<div class="r" style="left:26.00px;top:1235.54px;width:223.50px;height:1.00px;background:#cfcfd2;"></div>
<div class="r" style="left:694.00px;top:1235.54px;width:111.00px;height:1.00px;background:#cfcfd2;"></div>
<div class="r" style="left:249.50px;top:1236.14px;width:111.00px;height:42.54px;background:#fdde90;"></div>
<div class="r" style="left:360.50px;top:1236.14px;width:333.60px;height:42.54px;background:#fdc57a;"></div>
<div class="t" style="left:274.50px;width:60px;text-align:center;top:1249.83px;font-size:17.5px;color:#333;font-weight:normal;font-style:normal;">2</div>
<div class="t" style="left:385.40px;width:60px;text-align:center;top:1249.83px;font-size:17.5px;color:#333;font-weight:normal;font-style:normal;">2</div>
<div class="t" style="left:496.50px;width:60px;text-align:center;top:1249.83px;font-size:17.5px;color:#333;font-weight:normal;font-style:normal;">2</div>
<div class="t" style="left:608.05px;width:60px;text-align:center;top:1249.83px;font-size:17.5px;color:#333;font-weight:normal;font-style:normal;">2</div>
<div class="t" style="left:39.00px;top:1249.34px;font-size:18.9px;color:#0f5a9f;font-weight:normal;font-style:normal;-webkit-text-stroke:0.45px #0f5a9f;">Carbajal, Ravi</div>
<div class="r" style="left:26.00px;top:1278.08px;width:223.50px;height:1.00px;background:#cfcfd2;"></div>
<div class="r" style="left:694.00px;top:1278.08px;width:111.00px;height:1.00px;background:#cfcfd2;"></div>
<div class="r" style="left:249.50px;top:1278.68px;width:111.00px;height:42.54px;background:#c9e882;"></div>
<div class="r" style="left:360.50px;top:1278.68px;width:333.60px;height:42.54px;background:#a9da6f;"></div>
<div class="t" style="left:274.50px;width:60px;text-align:center;top:1292.37px;font-size:17.5px;color:#333;font-weight:normal;font-style:normal;">3</div>
<div class="t" style="left:385.40px;width:60px;text-align:center;top:1292.37px;font-size:17.5px;color:#333;font-weight:normal;font-style:normal;">4</div>
<div class="t" style="left:496.50px;width:60px;text-align:center;top:1292.37px;font-size:17.5px;color:#333;font-weight:normal;font-style:normal;">4</div>
<div class="t" style="left:608.05px;width:60px;text-align:center;top:1292.37px;font-size:17.5px;color:#333;font-weight:normal;font-style:normal;">4</div>
<div class="t" style="left:39.00px;top:1291.88px;font-size:18.9px;color:#0f5a9f;font-weight:normal;font-style:normal;-webkit-text-stroke:0.45px #0f5a9f;">Chan, Ray</div>
<div class="r" style="left:26.00px;top:1320.62px;width:223.50px;height:1.00px;background:#cfcfd2;"></div>
<div class="r" style="left:694.00px;top:1320.62px;width:111.00px;height:1.00px;background:#cfcfd2;"></div>
<div class="r" style="left:249.50px;top:1321.22px;width:111.00px;height:42.54px;background:#f7f4a7;"></div>
<div class="r" style="left:360.50px;top:1321.22px;width:333.60px;height:42.54px;background:#f7f4a7;"></div>
<div class="t" style="left:274.50px;width:60px;text-align:center;top:1334.91px;font-size:17.5px;color:#333;font-weight:normal;font-style:normal;">3</div>
<div class="t" style="left:385.40px;width:60px;text-align:center;top:1334.91px;font-size:17.5px;color:#333;font-weight:normal;font-style:normal;">3</div>
<div class="t" style="left:496.50px;width:60px;text-align:center;top:1334.91px;font-size:17.5px;color:#333;font-weight:normal;font-style:normal;">3</div>
<div class="t" style="left:608.05px;width:60px;text-align:center;top:1334.91px;font-size:17.5px;color:#333;font-weight:normal;font-style:normal;">3</div>
<div class="t" style="left:39.00px;top:1334.42px;font-size:18.9px;color:#0f5a9f;font-weight:normal;font-style:normal;-webkit-text-stroke:0.45px #0f5a9f;">Chandler, Heather</div>
<div class="r" style="left:26.00px;top:1363.16px;width:223.50px;height:1.00px;background:#cfcfd2;"></div>
<div class="r" style="left:694.00px;top:1363.16px;width:111.00px;height:1.00px;background:#cfcfd2;"></div>
<div class="r" style="left:249.50px;top:1363.76px;width:111.00px;height:42.54px;background:#e5f5a0;"></div>
<div class="r" style="left:360.50px;top:1363.76px;width:333.60px;height:42.54px;background:#fdefa4;"></div>
<div class="t" style="left:274.50px;width:60px;text-align:center;top:1377.45px;font-size:17.5px;color:#333;font-weight:normal;font-style:normal;">3</div>
<div class="t" style="left:385.40px;width:60px;text-align:center;top:1377.45px;font-size:17.5px;color:#333;font-weight:normal;font-style:normal;">2</div>
<div class="t" style="left:496.50px;width:60px;text-align:center;top:1377.45px;font-size:17.5px;color:#333;font-weight:normal;font-style:normal;">2</div>
<div class="t" style="left:608.05px;width:60px;text-align:center;top:1377.45px;font-size:17.5px;color:#333;font-weight:normal;font-style:normal;">2</div>
<div class="t" style="left:39.00px;top:1376.96px;font-size:18.9px;color:#0f5a9f;font-weight:normal;font-style:normal;-webkit-text-stroke:0.45px #0f5a9f;">Godfrey, Christopher</div>
<div class="r" style="left:26.00px;top:1405.70px;width:223.50px;height:1.00px;background:#cfcfd2;"></div>
<div class="r" style="left:694.00px;top:1405.70px;width:111.00px;height:1.00px;background:#cfcfd2;"></div>
<div class="r" style="left:249.50px;top:1406.30px;width:111.00px;height:42.54px;background:#a9da6f;"></div>
<div class="r" style="left:360.50px;top:1406.30px;width:333.60px;height:42.54px;background:#c9e882;"></div>
<div class="t" style="left:274.50px;width:60px;text-align:center;top:1419.99px;font-size:17.5px;color:#333;font-weight:normal;font-style:normal;">4</div>
<div class="t" style="left:385.40px;width:60px;text-align:center;top:1419.99px;font-size:17.5px;color:#333;font-weight:normal;font-style:normal;">4</div>
<div class="t" style="left:496.50px;width:60px;text-align:center;top:1419.99px;font-size:17.5px;color:#333;font-weight:normal;font-style:normal;">4</div>
<div class="t" style="left:608.05px;width:60px;text-align:center;top:1419.99px;font-size:17.5px;color:#333;font-weight:normal;font-style:normal;">4</div>
<div class="t" style="left:39.00px;top:1419.50px;font-size:18.9px;color:#0f5a9f;font-weight:normal;font-style:normal;-webkit-text-stroke:0.45px #0f5a9f;">Gonzales, Kathryn</div>
<div class="r" style="left:26.00px;top:1448.24px;width:223.50px;height:1.00px;background:#cfcfd2;"></div>
<div class="r" style="left:694.00px;top:1448.24px;width:111.00px;height:1.00px;background:#cfcfd2;"></div>
<div class="r" style="left:249.50px;top:1448.84px;width:111.00px;height:42.54px;background:#c9e882;"></div>
<div class="r" style="left:360.50px;top:1448.84px;width:333.60px;height:42.54px;background:#a9da6f;"></div>
<div class="t" style="left:274.50px;width:60px;text-align:center;top:1462.53px;font-size:17.5px;color:#333;font-weight:normal;font-style:normal;">3</div>
<div class="t" style="left:385.40px;width:60px;text-align:center;top:1462.53px;font-size:17.5px;color:#333;font-weight:normal;font-style:normal;">4</div>
<div class="t" style="left:496.50px;width:60px;text-align:center;top:1462.53px;font-size:17.5px;color:#333;font-weight:normal;font-style:normal;">4</div>
<div class="t" style="left:608.05px;width:60px;text-align:center;top:1462.53px;font-size:17.5px;color:#333;font-weight:normal;font-style:normal;">4</div>
<div class="t" style="left:39.00px;top:1462.04px;font-size:18.9px;color:#0f5a9f;font-weight:normal;font-style:normal;-webkit-text-stroke:0.45px #0f5a9f;">Hope, Willie</div>
<div class="r" style="left:26.00px;top:1490.78px;width:223.50px;height:1.00px;background:#cfcfd2;"></div>
<div class="r" style="left:694.00px;top:1490.78px;width:111.00px;height:1.00px;background:#cfcfd2;"></div>
<div class="r" style="left:249.50px;top:1491.38px;width:111.00px;height:42.54px;background:#fdc57a;"></div>
<div class="r" style="left:360.50px;top:1491.38px;width:333.60px;height:42.54px;background:#fdc57a;"></div>
<div class="t" style="left:274.50px;width:60px;text-align:center;top:1505.07px;font-size:17.5px;color:#333;font-weight:normal;font-style:normal;">2</div>
<div class="t" style="left:385.40px;width:60px;text-align:center;top:1505.07px;font-size:17.5px;color:#333;font-weight:normal;font-style:normal;">2</div>
<div class="t" style="left:496.50px;width:60px;text-align:center;top:1505.07px;font-size:17.5px;color:#333;font-weight:normal;font-style:normal;">2</div>
<div class="t" style="left:608.05px;width:60px;text-align:center;top:1505.07px;font-size:17.5px;color:#333;font-weight:normal;font-style:normal;">2</div>
<div class="t" style="left:39.00px;top:1504.58px;font-size:18.9px;color:#0f5a9f;font-weight:normal;font-style:normal;-webkit-text-stroke:0.45px #0f5a9f;">Kirk, Preston</div>
<div class="r" style="left:26.00px;top:1533.32px;width:223.50px;height:1.00px;background:#cfcfd2;"></div>
<div class="r" style="left:694.00px;top:1533.32px;width:111.00px;height:1.00px;background:#cfcfd2;"></div>
<div class="r" style="left:249.50px;top:1533.92px;width:111.00px;height:42.54px;background:#f7f4a7;"></div>
<div class="r" style="left:360.50px;top:1533.92px;width:333.60px;height:42.54px;background:#fdde90;"></div>
<div class="t" style="left:274.50px;width:60px;text-align:center;top:1547.61px;font-size:17.5px;color:#333;font-weight:normal;font-style:normal;">3</div>
<div class="t" style="left:385.40px;width:60px;text-align:center;top:1547.61px;font-size:17.5px;color:#333;font-weight:normal;font-style:normal;">2</div>
<div class="t" style="left:496.50px;width:60px;text-align:center;top:1547.61px;font-size:17.5px;color:#333;font-weight:normal;font-style:normal;">2</div>
<div class="t" style="left:608.05px;width:60px;text-align:center;top:1547.61px;font-size:17.5px;color:#333;font-weight:normal;font-style:normal;">2</div>
<div class="t" style="left:39.00px;top:1547.12px;font-size:18.9px;color:#0f5a9f;font-weight:normal;font-style:normal;-webkit-text-stroke:0.45px #0f5a9f;">Lowe, Ernest</div>
<div class="r" style="left:26.00px;top:1575.86px;width:223.50px;height:1.00px;background:#cfcfd2;"></div>
<div class="r" style="left:694.00px;top:1575.86px;width:111.00px;height:1.00px;background:#cfcfd2;"></div>
<div class="r" style="left:249.50px;top:1576.46px;width:111.00px;height:42.54px;background:#c9e882;"></div>
<div class="r" style="left:360.50px;top:1576.46px;width:333.60px;height:42.54px;background:#fdefa4;"></div>
<div class="t" style="left:274.50px;width:60px;text-align:center;top:1590.15px;font-size:17.5px;color:#333;font-weight:normal;font-style:normal;">3</div>
<div class="t" style="left:385.40px;width:60px;text-align:center;top:1590.15px;font-size:17.5px;color:#333;font-weight:normal;font-style:normal;">2</div>
<div class="t" style="left:496.50px;width:60px;text-align:center;top:1590.15px;font-size:17.5px;color:#333;font-weight:normal;font-style:normal;">2</div>
<div class="t" style="left:608.05px;width:60px;text-align:center;top:1590.15px;font-size:17.5px;color:#333;font-weight:normal;font-style:normal;">2</div>
<div class="t" style="left:39.00px;top:1589.66px;font-size:18.9px;color:#0f5a9f;font-weight:normal;font-style:normal;-webkit-text-stroke:0.45px #0f5a9f;">Rauch, Roy</div>
<div class="r" style="left:26.00px;top:1618.40px;width:223.50px;height:1.00px;background:#cfcfd2;"></div>
<div class="r" style="left:694.00px;top:1618.40px;width:111.00px;height:1.00px;background:#cfcfd2;"></div>
<div class="r" style="left:249.50px;top:1619.00px;width:111.00px;height:42.54px;background:#e5f5a0;"></div>
<div class="r" style="left:360.50px;top:1619.00px;width:333.60px;height:42.54px;background:#7ec86a;"></div>
<div class="t" style="left:274.50px;width:60px;text-align:center;top:1632.69px;font-size:17.5px;color:#333;font-weight:normal;font-style:normal;">3</div>
<div class="t" style="left:385.40px;width:60px;text-align:center;top:1632.69px;font-size:17.5px;color:#333;font-weight:normal;font-style:normal;">4</div>
<div class="t" style="left:496.50px;width:60px;text-align:center;top:1632.69px;font-size:17.5px;color:#333;font-weight:normal;font-style:normal;">4</div>
<div class="t" style="left:608.05px;width:60px;text-align:center;top:1632.69px;font-size:17.5px;color:#333;font-weight:normal;font-style:normal;">4</div>
<div class="t" style="left:39.00px;top:1632.20px;font-size:18.9px;color:#0f5a9f;font-weight:normal;font-style:normal;-webkit-text-stroke:0.45px #0f5a9f;">Swift, Delilah</div>
<div class="r" style="left:26.00px;top:1660.94px;width:223.50px;height:1.00px;background:#cfcfd2;"></div>
<div class="r" style="left:694.00px;top:1660.94px;width:111.00px;height:1.00px;background:#cfcfd2;"></div>
<div class="r" style="left:249.50px;top:1661.54px;width:111.00px;height:42.54px;background:#c9e882;"></div>
<div class="r" style="left:360.50px;top:1661.54px;width:333.60px;height:42.54px;background:#e5f5a0;"></div>
<div class="t" style="left:274.50px;width:60px;text-align:center;top:1675.23px;font-size:17.5px;color:#333;font-weight:normal;font-style:normal;">4</div>
<div class="t" style="left:385.40px;width:60px;text-align:center;top:1675.23px;font-size:17.5px;color:#333;font-weight:normal;font-style:normal;">3</div>
<div class="t" style="left:496.50px;width:60px;text-align:center;top:1675.23px;font-size:17.5px;color:#333;font-weight:normal;font-style:normal;">3</div>
<div class="t" style="left:608.05px;width:60px;text-align:center;top:1675.23px;font-size:17.5px;color:#333;font-weight:normal;font-style:normal;">3</div>
<div class="t" style="left:39.00px;top:1674.74px;font-size:18.9px;color:#0f5a9f;font-weight:normal;font-style:normal;-webkit-text-stroke:0.45px #0f5a9f;">Terrell, Halina</div>
<div class="r" style="left:26.00px;top:1703.48px;width:223.50px;height:1.00px;background:#cfcfd2;"></div>
<div class="r" style="left:694.00px;top:1703.48px;width:111.00px;height:1.00px;background:#cfcfd2;"></div>
<div class="r" style="left:249.50px;top:1704.08px;width:111.00px;height:42.54px;background:#fdc57a;"></div>
<div class="r" style="left:360.50px;top:1704.08px;width:333.60px;height:42.54px;background:#fdde90;"></div>
<div class="t" style="left:274.50px;width:60px;text-align:center;top:1717.77px;font-size:17.5px;color:#333;font-weight:normal;font-style:normal;">2</div>
<div class="t" style="left:385.40px;width:60px;text-align:center;top:1717.77px;font-size:17.5px;color:#333;font-weight:normal;font-style:normal;">2</div>
<div class="t" style="left:496.50px;width:60px;text-align:center;top:1717.77px;font-size:17.5px;color:#333;font-weight:normal;font-style:normal;">2</div>
<div class="t" style="left:608.05px;width:60px;text-align:center;top:1717.77px;font-size:17.5px;color:#333;font-weight:normal;font-style:normal;">2</div>
<div class="t" style="left:39.00px;top:1717.28px;font-size:18.9px;color:#0f5a9f;font-weight:normal;font-style:normal;-webkit-text-stroke:0.45px #0f5a9f;">Urdad, Joyce</div>
<div class="r" style="left:26.00px;top:1746.02px;width:223.50px;height:1.00px;background:#cfcfd2;"></div>
<div class="r" style="left:694.00px;top:1746.02px;width:111.00px;height:1.00px;background:#cfcfd2;"></div>
<div class="r" style="left:249.50px;top:1746.62px;width:111.00px;height:42.54px;background:#c9e882;"></div>
<div class="r" style="left:360.50px;top:1746.62px;width:333.60px;height:42.54px;background:#a9da6f;"></div>
<div class="t" style="left:274.50px;width:60px;text-align:center;top:1760.31px;font-size:17.5px;color:#333;font-weight:normal;font-style:normal;">3</div>
<div class="t" style="left:385.40px;width:60px;text-align:center;top:1760.31px;font-size:17.5px;color:#333;font-weight:normal;font-style:normal;">4</div>
<div class="t" style="left:496.50px;width:60px;text-align:center;top:1760.31px;font-size:17.5px;color:#333;font-weight:normal;font-style:normal;">4</div>
<div class="t" style="left:608.05px;width:60px;text-align:center;top:1760.31px;font-size:17.5px;color:#333;font-weight:normal;font-style:normal;">4</div>
<div class="t" style="left:39.00px;top:1759.82px;font-size:18.9px;color:#0f5a9f;font-weight:normal;font-style:normal;-webkit-text-stroke:0.45px #0f5a9f;">Usko, Edna</div>
<div class="r" style="left:26.00px;top:1788.56px;width:223.50px;height:1.00px;background:#cfcfd2;"></div>
<div class="r" style="left:694.00px;top:1788.56px;width:111.00px;height:1.00px;background:#cfcfd2;"></div>
<div class="r" style="left:249.50px;top:1789.16px;width:111.00px;height:42.54px;background:#fdc57a;"></div>
<div class="r" style="left:360.50px;top:1789.16px;width:333.60px;height:42.54px;background:#fdefa4;"></div>
<div class="t" style="left:274.50px;width:60px;text-align:center;top:1802.85px;font-size:17.5px;color:#333;font-weight:normal;font-style:normal;">2</div>
<div class="t" style="left:385.40px;width:60px;text-align:center;top:1802.85px;font-size:17.5px;color:#333;font-weight:normal;font-style:normal;">2</div>
<div class="t" style="left:496.50px;width:60px;text-align:center;top:1802.85px;font-size:17.5px;color:#333;font-weight:normal;font-style:normal;">2</div>
<div class="t" style="left:608.05px;width:60px;text-align:center;top:1802.85px;font-size:17.5px;color:#333;font-weight:normal;font-style:normal;">2</div>
<div class="t" style="left:39.00px;top:1802.36px;font-size:18.9px;color:#0f5a9f;font-weight:normal;font-style:normal;-webkit-text-stroke:0.45px #0f5a9f;">Wallace, Yvar</div>
<div class="r" style="left:26.00px;top:1831.10px;width:223.50px;height:1.00px;background:#cfcfd2;"></div>
<div class="r" style="left:694.00px;top:1831.10px;width:111.00px;height:1.00px;background:#cfcfd2;"></div>
</div>
<div class="r" style="left:0;top:0;width:1918px;height:942px;box-sizing:border-box;border:1px solid #b2b5b6;"></div>
</div>
</body></html>
